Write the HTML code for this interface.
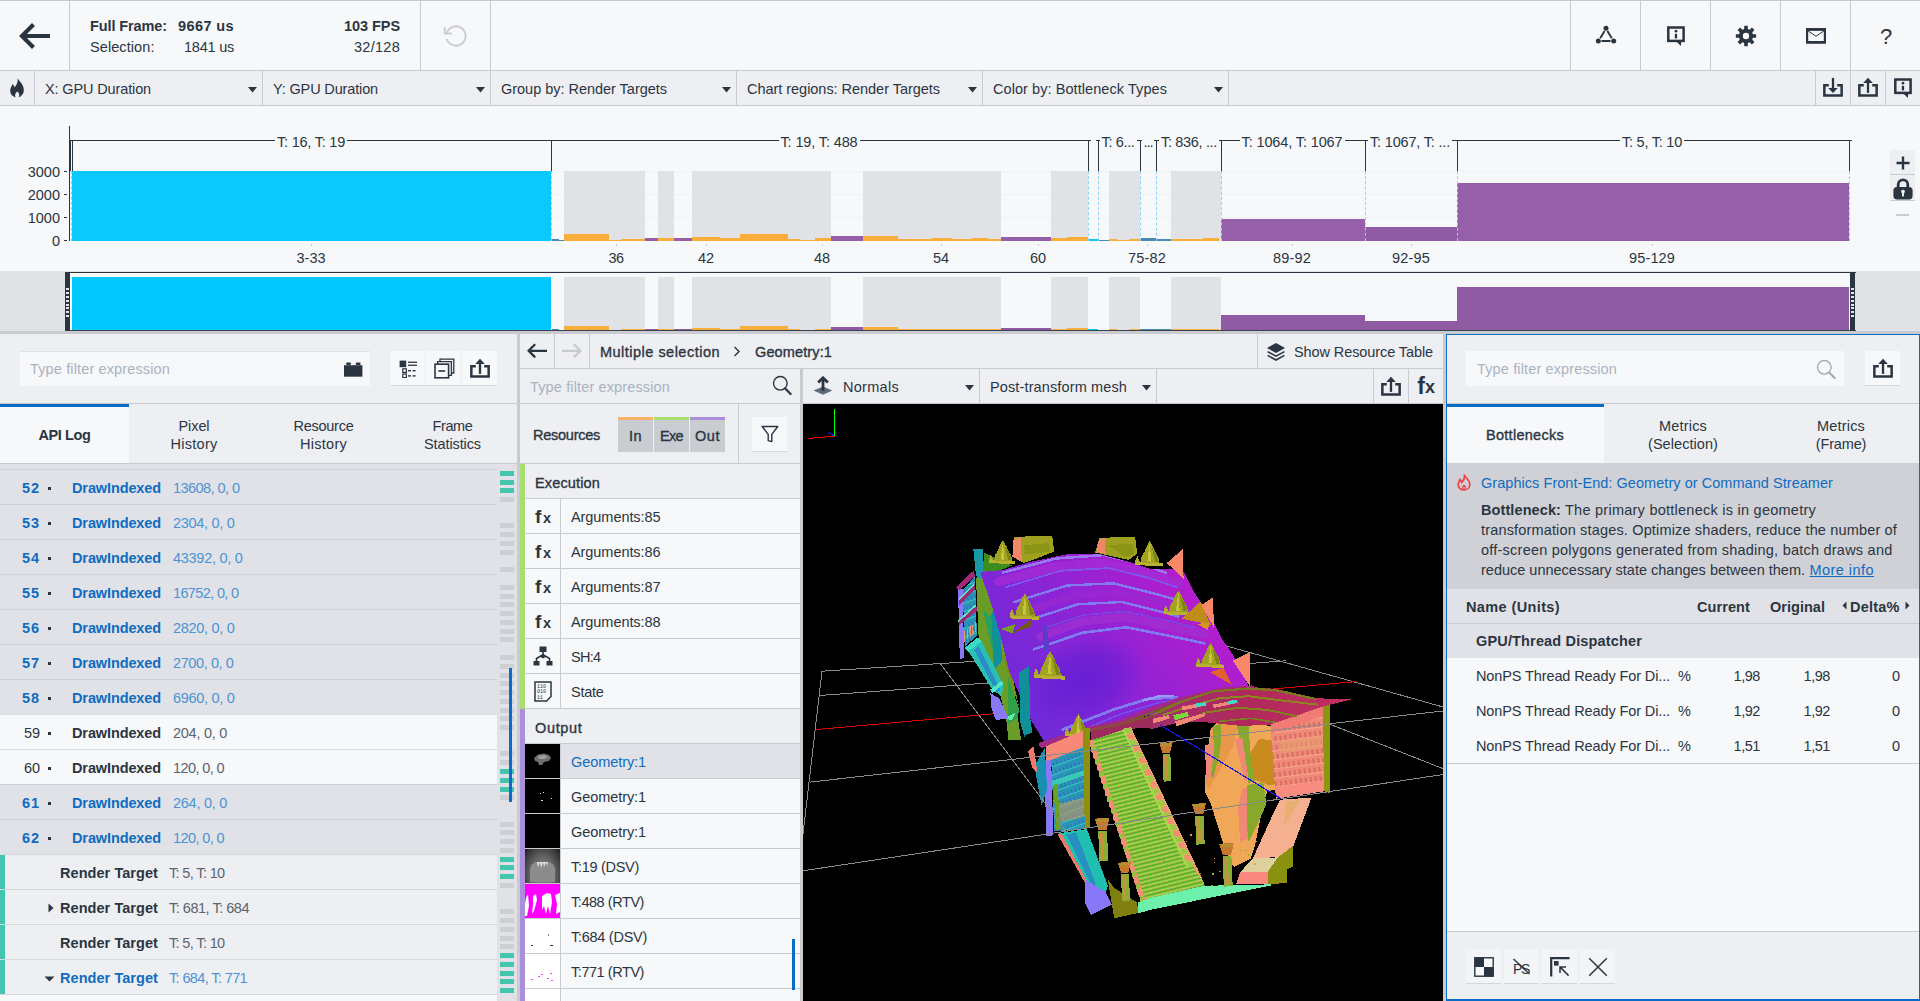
<!DOCTYPE html>
<html lang="en"><head><meta charset="utf-8"><title>Graphics Frame Analyzer</title>
<style>
html,body{margin:0;padding:0;background:#f7f8fa;overflow:hidden}
#app{position:relative;width:1920px;height:1001px;overflow:hidden;background:#f7f8fa;font-family:"Liberation Sans",sans-serif;color:#2b3541}
#app div,#app span.t,#app svg{position:absolute}
span.t{white-space:pre}

</style></head>
<body>
<div id="app">
<div style="left:0px;top:0px;width:1920px;height:70px;background:#f7f8fa;"></div>
<div style="left:0px;top:0px;width:1920px;height:1px;background:#c5c7cc;"></div>
<div style="left:0px;top:70px;width:1920px;height:1px;background:#c9cbd0;"></div>
<div style="left:69px;top:1px;width:1px;height:69px;background:#c9cbd0;"></div>
<div style="left:420px;top:1px;width:1px;height:69px;background:#c9cbd0;"></div>
<div style="left:490px;top:1px;width:1px;height:69px;background:#c9cbd0;"></div>
<div style="left:1570px;top:1px;width:1px;height:69px;background:#c9cbd0;"></div>
<div style="left:1640px;top:1px;width:1px;height:69px;background:#c9cbd0;"></div>
<div style="left:1710px;top:1px;width:1px;height:69px;background:#c9cbd0;"></div>
<div style="left:1780px;top:1px;width:1px;height:69px;background:#c9cbd0;"></div>
<div style="left:1850px;top:1px;width:1px;height:69px;background:#c9cbd0;"></div>
<svg style="left:19px;top:22px;" width="32" height="28" viewBox="0 0 32 28"><path d="M14.5 2.5 L3 14 L14.5 25.5 M3 14 H31" fill="none" stroke="#2b3541" stroke-width="4.2" stroke-linejoin="miter"/></svg>
<span class="t " style="left:90.00px;top:15.98px;font-size:14.5px;line-height:20px;color:#2b3541;font-weight:700;letter-spacing:-0.105px;">Full Frame:</span>
<span class="t " style="left:178.00px;top:15.98px;font-size:14.5px;line-height:20px;color:#2b3541;font-weight:700;letter-spacing:0.397px;">9667 us</span>
<span class="t " style="left:90.00px;top:36.98px;font-size:14.5px;line-height:20px;color:#2b3541;letter-spacing:0.081px;">Selection:</span>
<span class="t " style="left:184.00px;top:36.98px;font-size:14.5px;line-height:20px;color:#2b3541;letter-spacing:-0.230px;">1841 us</span>
<span class="t " style="left:344.00px;top:15.98px;font-size:14.5px;line-height:20px;color:#2b3541;font-weight:700;letter-spacing:-0.060px;">103 FPS</span>
<span class="t " style="left:354.00px;top:36.98px;font-size:14.5px;line-height:20px;color:#2b3541;letter-spacing:0.273px;">32/128</span>
<svg style="left:442.6px;top:22.8px;" width="26" height="26" viewBox="0 0 26 26"><path d="M3.6 10.2 A9.7 9.7 0 1 1 3.7 16" fill="none" stroke="#caccd1" stroke-width="1.9"/><path d="M1.7 4.2 V10.5 H8.8" fill="none" stroke="#caccd1" stroke-width="1.9"/></svg>
<svg style="left:1594px;top:24px;" width="24" height="24" viewBox="0 0 24 24"><path d="M10.6 7 L6.2 14.2 M13.4 7 L17.8 14.2 M7.4 17 H16.6" fill="none" stroke="#2b3541" stroke-width="1.9"/><circle cx="12" cy="4.3" r="2.5" fill="#2b3541"/><circle cx="4.3" cy="17" r="2.5" fill="#2b3541"/><circle cx="19.7" cy="17" r="2.5" fill="#2b3541"/></svg>
<svg style="left:1666px;top:25px;" width="20" height="22" viewBox="0 0 20 22"><rect x="2.3" y="2.5" width="15.3" height="13.4" fill="none" stroke="#2b3541" stroke-width="2.5"/><path d="M10.6 16.8 H15.2 L14.9 21 Z" fill="#2b3541"/><rect x="8.8" y="8.8" width="2.3" height="4.6" fill="#2b3541"/><circle cx="9.95" cy="6.2" r="1.35" fill="#2b3541"/></svg>
<svg style="left:1734px;top:24px;" width="24" height="24" viewBox="0 0 24 24"><path d="M10.26 1.85 L13.74 1.85 L13.85 5.04 L15.61 5.77 L17.95 3.59 L20.41 6.05 L18.23 8.39 L18.96 10.15 L22.15 10.26 L22.15 13.74 L18.96 13.85 L18.23 15.61 L20.41 17.95 L17.95 20.41 L15.61 18.23 L13.85 18.96 L13.74 22.15 L10.26 22.15 L10.15 18.96 L8.39 18.23 L6.05 20.41 L3.59 17.95 L5.77 15.61 L5.04 13.85 L1.85 13.74 L1.85 10.26 L5.04 10.15 L5.77 8.39 L3.59 6.05 L6.05 3.59 L8.39 5.77 L10.15 5.04 Z M15.2 12 A3.2 3.2 0 1 0 8.8 12 A3.2 3.2 0 1 0 15.2 12 Z" fill="#2b3541" fill-rule="evenodd"/></svg>
<svg style="left:1805px;top:27px;" width="22" height="18" viewBox="0 0 22 18"><rect x="2.1" y="2.3" width="17.8" height="13" fill="none" stroke="#2b3541" stroke-width="2.2"/><rect x="1" y="1.2" width="20" height="2.6" fill="#2b3541"/><rect x="1" y="14" width="20" height="2.6" fill="#2b3541"/><path d="M2.5 3.5 L11 9.2 L19.5 3.5" fill="none" stroke="#2b3541" stroke-width="1"/></svg>
<span class="t " style="left:1879.88px;top:20.88px;font-size:22px;line-height:31px;color:#2b3541;">?</span>
<div style="left:0px;top:71px;width:1920px;height:34px;background:#eeeff3;"></div>
<div style="left:0px;top:105px;width:1920px;height:1px;background:#c9cbd0;"></div>
<div style="left:34px;top:71px;width:1px;height:34px;background:#c9cbd0;"></div>
<div style="left:262px;top:71px;width:1px;height:34px;background:#c9cbd0;"></div>
<div style="left:490px;top:71px;width:1px;height:34px;background:#c9cbd0;"></div>
<div style="left:736px;top:71px;width:1px;height:34px;background:#c9cbd0;"></div>
<div style="left:982px;top:71px;width:1px;height:34px;background:#c9cbd0;"></div>
<div style="left:1228px;top:71px;width:1px;height:34px;background:#c9cbd0;"></div>
<div style="left:1815px;top:71px;width:1px;height:34px;background:#c9cbd0;"></div>
<div style="left:1850px;top:71px;width:1px;height:34px;background:#c9cbd0;"></div>
<div style="left:1885px;top:71px;width:1px;height:34px;background:#c9cbd0;"></div>
<svg style="left:9px;top:78px;" width="16" height="20" viewBox="0 0 16 20"><path d="M8.6 0.3 C10.5 3.5 14.8 6.5 14.8 12 C14.8 16 12 18.6 9.6 19.2 C10.8 17.6 10.6 15.2 8.2 13.6 C6.2 15.2 5.6 17.4 6.6 19.2 C3.6 18.4 1 16 1.2 12.2 C1.4 9.6 3 8 3.6 6 C4.8 7.2 5.2 8.2 5.2 9.6 C7.6 7.6 9.2 4 8.6 0.3 Z" fill="#2b3541"/></svg>
<span class="t " style="left:45.00px;top:78.98px;font-size:14.5px;line-height:20px;color:#2b3541;letter-spacing:-0.133px;">X: GPU Duration</span>
<svg style="left:247.5px;top:86.6px;" width="9" height="6" viewBox="0 0 9 6"><path d="M0 0 H9 L4.5 5.6 Z" fill="#2b3541"/></svg>
<span class="t " style="left:273.00px;top:78.98px;font-size:14.5px;line-height:20px;color:#2b3541;letter-spacing:-0.146px;">Y: GPU Duration</span>
<svg style="left:475.5px;top:86.6px;" width="9" height="6" viewBox="0 0 9 6"><path d="M0 0 H9 L4.5 5.6 Z" fill="#2b3541"/></svg>
<span class="t " style="left:501.00px;top:78.98px;font-size:14.5px;line-height:20px;color:#2b3541;letter-spacing:-0.024px;">Group by: Render Targets</span>
<svg style="left:721.5px;top:86.6px;" width="9" height="6" viewBox="0 0 9 6"><path d="M0 0 H9 L4.5 5.6 Z" fill="#2b3541"/></svg>
<span class="t " style="left:747.00px;top:78.98px;font-size:14.5px;line-height:20px;color:#2b3541;letter-spacing:-0.034px;">Chart regions: Render Targets</span>
<svg style="left:967.5px;top:86.6px;" width="9" height="6" viewBox="0 0 9 6"><path d="M0 0 H9 L4.5 5.6 Z" fill="#2b3541"/></svg>
<span class="t " style="left:993.00px;top:78.98px;font-size:14.5px;line-height:20px;color:#2b3541;letter-spacing:0.069px;">Color by: Bottleneck Types</span>
<svg style="left:1213.5px;top:86.6px;" width="9" height="6" viewBox="0 0 9 6"><path d="M0 0 H9 L4.5 5.6 Z" fill="#2b3541"/></svg>
<svg style="left:1823px;top:77px;" width="20" height="20" viewBox="0 0 20 20"><path d="M5.8 8.35 H1.35 V18.5 H18.65 V8.35 H14.2" fill="none" stroke="#2b3541" stroke-width="2.5"/><rect x="8.85" y="0.9" width="2.3" height="10.6" fill="#2b3541"/><path d="M5.2 11.1 L10 16 L14.8 11.1 Z" fill="#2b3541"/></svg>
<svg style="left:1858px;top:77px;" width="20" height="20" viewBox="0 0 20 20"><path d="M5.8 8.35 H1.35 V18.5 H18.65 V8.35 H14.2" fill="none" stroke="#2b3541" stroke-width="2.5"/><rect x="8.85" y="5" width="2.3" height="10.9" fill="#2b3541"/><path d="M5.2 5.9 L10 0.8 L14.8 5.9 Z" fill="#2b3541"/></svg>
<svg style="left:1893px;top:77px;" width="20" height="22" viewBox="0 0 20 22"><rect x="2.3" y="2.5" width="15.3" height="13.4" fill="none" stroke="#2b3541" stroke-width="2.5"/><path d="M10.6 16.8 H15.2 L14.9 21 Z" fill="#2b3541"/><rect x="8.8" y="8.8" width="2.3" height="4.6" fill="#2b3541"/><circle cx="9.95" cy="6.2" r="1.35" fill="#2b3541"/></svg>
<div style="left:0px;top:106px;width:1920px;height:165px;background:#f7f8fa;"></div>
<div style="left:69px;top:126px;width:1px;height:115px;background:#2b3541;"></div>
<span class="t " style="left:27.73px;top:161.88px;font-size:14.5px;line-height:20px;color:#2b3541;">3000</span>
<div style="left:64px;top:171px;width:3px;height:1px;background:#2b3541;"></div>
<span class="t " style="left:27.73px;top:184.88px;font-size:14.5px;line-height:20px;color:#2b3541;">2000</span>
<div style="left:64px;top:194px;width:3px;height:1px;background:#2b3541;"></div>
<span class="t " style="left:27.73px;top:207.88px;font-size:14.5px;line-height:20px;color:#2b3541;">1000</span>
<div style="left:64px;top:217px;width:3px;height:1px;background:#2b3541;"></div>
<span class="t " style="left:51.92px;top:230.88px;font-size:14.5px;line-height:20px;color:#2b3541;">0</span>
<div style="left:64px;top:240px;width:3px;height:1px;background:#2b3541;"></div>
<div style="left:72px;top:171px;width:1778px;height:1px;background:#f0f1f4;"></div>
<div style="left:72px;top:194px;width:1778px;height:1px;background:#f0f1f4;"></div>
<div style="left:72px;top:217px;width:1778px;height:1px;background:#f0f1f4;"></div>
<div style="left:564px;top:171px;width:81px;height:70px;background:#e1e2e6;"></div>
<div style="left:658px;top:171px;width:16px;height:70px;background:#e1e2e6;"></div>
<div style="left:692px;top:171px;width:139px;height:70px;background:#e1e2e6;"></div>
<div style="left:863px;top:171px;width:138px;height:70px;background:#e1e2e6;"></div>
<div style="left:1051px;top:171px;width:37px;height:70px;background:#e1e2e6;"></div>
<div style="left:1109px;top:171px;width:31px;height:70px;background:#e1e2e6;"></div>
<div style="left:1171px;top:171px;width:50px;height:70px;background:#e1e2e6;"></div>
<div style="left:72px;top:171px;width:479px;height:70px;background:#0cc9fd;"></div>
<div style="left:552px;top:239px;width:7px;height:2px;background:#4a8bb5;"></div>
<div style="left:559px;top:240px;width:5px;height:1px;background:#4a8bb5;"></div>
<div style="left:564px;top:234px;width:45px;height:7px;background:#f9ae3b;"></div>
<div style="left:609px;top:240px;width:12px;height:1px;background:#f9ae3b;"></div>
<div style="left:621px;top:239px;width:24px;height:2px;background:#f9ae3b;"></div>
<div style="left:645px;top:238px;width:13px;height:3px;background:#9560a9;"></div>
<div style="left:658px;top:238px;width:16px;height:3px;background:#f9ae3b;"></div>
<div style="left:674px;top:238px;width:18px;height:3px;background:#9560a9;"></div>
<div style="left:692px;top:237px;width:28px;height:4px;background:#f9ae3b;"></div>
<div style="left:720px;top:238px;width:20px;height:3px;background:#f9ae3b;"></div>
<div style="left:740px;top:234px;width:48px;height:7px;background:#f9ae3b;"></div>
<div style="left:788px;top:239px;width:12px;height:2px;background:#f9ae3b;"></div>
<div style="left:800px;top:240px;width:15px;height:1px;background:#f9ae3b;"></div>
<div style="left:815px;top:238px;width:16px;height:3px;background:#f9ae3b;"></div>
<div style="left:831px;top:236px;width:32px;height:5px;background:#9560a9;"></div>
<div style="left:863px;top:236px;width:35px;height:5px;background:#f9ae3b;"></div>
<div style="left:898px;top:239px;width:34px;height:2px;background:#f9ae3b;"></div>
<div style="left:932px;top:238px;width:20px;height:3px;background:#f9ae3b;"></div>
<div style="left:952px;top:239px;width:20px;height:2px;background:#f9ae3b;"></div>
<div style="left:972px;top:238px;width:16px;height:3px;background:#f9ae3b;"></div>
<div style="left:988px;top:239px;width:13px;height:2px;background:#f9ae3b;"></div>
<div style="left:1001px;top:237px;width:50px;height:4px;background:#9560a9;"></div>
<div style="left:1051px;top:238px;width:16px;height:3px;background:#f9ae3b;"></div>
<div style="left:1067px;top:237px;width:21px;height:4px;background:#f9ae3b;"></div>
<div style="left:1088px;top:239px;width:10px;height:2px;background:#0cc9fd;"></div>
<div style="left:1098px;top:240px;width:11px;height:1px;background:#4a8bb5;"></div>
<div style="left:1109px;top:239px;width:8px;height:2px;background:#f9ae3b;"></div>
<div style="left:1117px;top:240px;width:12px;height:1px;background:#f9ae3b;"></div>
<div style="left:1129px;top:239px;width:11px;height:2px;background:#f9ae3b;"></div>
<div style="left:1140px;top:238px;width:16px;height:3px;background:#4a8bb5;"></div>
<div style="left:1156px;top:239px;width:15px;height:2px;background:#4a8bb5;"></div>
<div style="left:1171px;top:239px;width:32px;height:2px;background:#f9ae3b;"></div>
<div style="left:1203px;top:238px;width:16px;height:3px;background:#f9ae3b;"></div>
<div style="left:1221px;top:219px;width:144px;height:22px;background:#9560a9;"></div>
<div style="left:1365px;top:227px;width:92px;height:14px;background:#8f5ba3;"></div>
<div style="left:1457px;top:183px;width:392px;height:58px;background:#9560a9;"></div>
<div style="left:71px;top:171px;width:0px;height:70px;border-left:1px dashed #8fd3f0;"></div>
<div style="left:551px;top:171px;width:0px;height:70px;border-left:1px dashed #8fd3f0;"></div>
<div style="left:1088px;top:171px;width:0px;height:70px;border-left:1px dashed #8fd3f0;"></div>
<div style="left:1098px;top:171px;width:0px;height:70px;border-left:1px dashed #8fd3f0;"></div>
<div style="left:1140px;top:171px;width:0px;height:70px;border-left:1px dashed #8fd3f0;"></div>
<div style="left:1156px;top:171px;width:0px;height:70px;border-left:1px dashed #8fd3f0;"></div>
<div style="left:1221px;top:171px;width:0px;height:70px;border-left:1px dashed #8fd3f0;"></div>
<div style="left:1365px;top:171px;width:0px;height:70px;border-left:1px dashed #8fd3f0;"></div>
<div style="left:1457px;top:171px;width:0px;height:70px;border-left:1px dashed #8fd3f0;"></div>
<div style="left:1849px;top:171px;width:0px;height:70px;border-left:1px dashed #8fd3f0;"></div>
<div style="left:70px;top:140px;width:484px;height:1px;background:#2b3541;"></div>
<div style="left:70px;top:140px;width:1px;height:31px;background:#2b3541;"></div>
<div style="left:551px;top:140px;width:1px;height:31px;background:#2b3541;"></div>
<div style="left:275.0px;top:132px;width:72px;height:18px;background:#f7f8fa;"></div>
<span class="t " style="left:277.00px;top:131.98px;font-size:14.5px;line-height:20px;color:#2b3541;letter-spacing:-0.223px;">T: 16, T: 19</span>
<div style="left:549px;top:140px;width:542px;height:1px;background:#2b3541;"></div>
<div style="left:551px;top:140px;width:1px;height:31px;background:#2b3541;"></div>
<div style="left:1088px;top:140px;width:1px;height:31px;background:#2b3541;"></div>
<div style="left:778.5px;top:132px;width:81px;height:18px;background:#f7f8fa;"></div>
<span class="t " style="left:780.50px;top:131.98px;font-size:14.5px;line-height:20px;color:#2b3541;letter-spacing:-0.133px;">T: 19, T: 488</span>
<div style="left:1096px;top:140px;width:47px;height:1px;background:#2b3541;"></div>
<div style="left:1098px;top:140px;width:1px;height:31px;background:#2b3541;"></div>
<div style="left:1140px;top:140px;width:1px;height:31px;background:#2b3541;"></div>
<div style="left:1099.5px;top:132px;width:37px;height:18px;background:#f7f8fa;"></div>
<span class="t " style="left:1101.50px;top:131.98px;font-size:14.5px;line-height:20px;color:#2b3541;letter-spacing:-0.353px;">T: 6...</span>
<div style="left:1138px;top:140px;width:21px;height:1px;background:#2b3541;"></div>
<div style="left:1140px;top:140px;width:1px;height:31px;background:#2b3541;"></div>
<div style="left:1156px;top:140px;width:1px;height:31px;background:#2b3541;"></div>
<div style="left:1141.5px;top:132px;width:13px;height:18px;background:#f7f8fa;"></div>
<span class="t " style="left:1143.50px;top:131.98px;font-size:14.5px;line-height:20px;color:#2b3541;letter-spacing:-1.031px;">...</span>
<div style="left:1154px;top:140px;width:70px;height:1px;background:#2b3541;"></div>
<div style="left:1156px;top:140px;width:1px;height:31px;background:#2b3541;"></div>
<div style="left:1221px;top:140px;width:1px;height:31px;background:#2b3541;"></div>
<div style="left:1159.0px;top:132px;width:60px;height:18px;background:#f7f8fa;"></div>
<span class="t " style="left:1161.00px;top:131.98px;font-size:14.5px;line-height:20px;color:#2b3541;letter-spacing:-0.332px;">T: 836, ...</span>
<div style="left:1219px;top:140px;width:149px;height:1px;background:#2b3541;"></div>
<div style="left:1221px;top:140px;width:1px;height:31px;background:#2b3541;"></div>
<div style="left:1365px;top:140px;width:1px;height:31px;background:#2b3541;"></div>
<div style="left:1239.5px;top:132px;width:105px;height:18px;background:#f7f8fa;"></div>
<span class="t " style="left:1241.50px;top:131.98px;font-size:14.5px;line-height:20px;color:#2b3541;letter-spacing:-0.121px;">T: 1064, T: 1067</span>
<div style="left:1363px;top:140px;width:97px;height:1px;background:#2b3541;"></div>
<div style="left:1365px;top:140px;width:1px;height:31px;background:#2b3541;"></div>
<div style="left:1457px;top:140px;width:1px;height:31px;background:#2b3541;"></div>
<div style="left:1368.0px;top:132px;width:84px;height:18px;background:#f7f8fa;"></div>
<span class="t " style="left:1370.00px;top:131.98px;font-size:14.5px;line-height:20px;color:#2b3541;letter-spacing:-0.184px;">T: 1067, T: ...</span>
<div style="left:1455px;top:140px;width:397px;height:1px;background:#2b3541;"></div>
<div style="left:1457px;top:140px;width:1px;height:31px;background:#2b3541;"></div>
<div style="left:1849px;top:140px;width:1px;height:31px;background:#2b3541;"></div>
<div style="left:1620.0px;top:132px;width:64px;height:18px;background:#f7f8fa;"></div>
<span class="t " style="left:1622.00px;top:131.98px;font-size:14.5px;line-height:20px;color:#2b3541;letter-spacing:-0.237px;">T: 5, T: 10</span>
<div style="left:72px;top:140px;width:1px;height:31px;background:#2b3541;"></div>
<span class="t " style="left:296.50px;top:247.98px;font-size:14.5px;line-height:20px;color:#2b3541;letter-spacing:-0.008px;">3-33</span>
<div style="left:311px;top:244px;width:1px;height:2px;background:#c9cbd0;"></div>
<span class="t " style="left:608.50px;top:247.98px;font-size:14.5px;line-height:20px;color:#2b3541;letter-spacing:-0.570px;">36</span>
<div style="left:616px;top:244px;width:1px;height:2px;background:#c9cbd0;"></div>
<span class="t " style="left:698.00px;top:247.98px;font-size:14.5px;line-height:20px;color:#2b3541;letter-spacing:-0.070px;">42</span>
<div style="left:706px;top:244px;width:1px;height:2px;background:#c9cbd0;"></div>
<span class="t " style="left:814.00px;top:247.98px;font-size:14.5px;line-height:20px;color:#2b3541;letter-spacing:-0.070px;">48</span>
<div style="left:822px;top:244px;width:1px;height:2px;background:#c9cbd0;"></div>
<span class="t " style="left:933.00px;top:247.98px;font-size:14.5px;line-height:20px;color:#2b3541;letter-spacing:-0.070px;">54</span>
<div style="left:941px;top:244px;width:1px;height:2px;background:#c9cbd0;"></div>
<span class="t " style="left:1030.00px;top:247.98px;font-size:14.5px;line-height:20px;color:#2b3541;letter-spacing:-0.070px;">60</span>
<div style="left:1038px;top:244px;width:1px;height:2px;background:#c9cbd0;"></div>
<span class="t " style="left:1128.00px;top:247.98px;font-size:14.5px;line-height:20px;color:#2b3541;letter-spacing:0.181px;">75-82</span>
<div style="left:1147px;top:244px;width:1px;height:2px;background:#c9cbd0;"></div>
<span class="t " style="left:1273.00px;top:247.98px;font-size:14.5px;line-height:20px;color:#2b3541;letter-spacing:0.181px;">89-92</span>
<div style="left:1292px;top:244px;width:1px;height:2px;background:#c9cbd0;"></div>
<span class="t " style="left:1392.00px;top:247.98px;font-size:14.5px;line-height:20px;color:#2b3541;letter-spacing:0.181px;">92-95</span>
<div style="left:1411px;top:244px;width:1px;height:2px;background:#c9cbd0;"></div>
<span class="t " style="left:1629.00px;top:247.98px;font-size:14.5px;line-height:20px;color:#2b3541;letter-spacing:0.141px;">95-129</span>
<div style="left:1652px;top:244px;width:1px;height:2px;background:#c9cbd0;"></div>
<div style="left:1890px;top:150px;width:25px;height:24px;background:#eeeff3;"></div>
<div style="left:1890px;top:174px;width:25px;height:1px;background:#c9cbd0;"></div>
<div style="left:1890px;top:175px;width:25px;height:25px;background:#eeeff3;"></div>
<div style="left:1890px;top:200px;width:25px;height:1px;background:#c9cbd0;"></div>
<svg style="left:1896px;top:156px;" width="14" height="14" viewBox="0 0 14 14"><path d="M7 0.5 V13.5 M0.5 7 H13.5" stroke="#2b3541" stroke-width="2.4"/></svg>
<svg style="left:1893px;top:177px;" width="20" height="23" viewBox="0 0 20 23"><path d="M5.2 12 V7.6 A4.8 4.8 0 0 1 14.8 7.6 V12" fill="none" stroke="#2b3541" stroke-width="2.8"/><rect x="0.4" y="10" width="19.2" height="12.4" rx="3.6" fill="#2b3541"/><circle cx="10" cy="14.6" r="1.9" fill="#eeeff3"/><rect x="9" y="15" width="2" height="4.4" fill="#eeeff3"/></svg>
<div style="left:1896px;top:214px;width:13px;height:2px;background:#c9cbd0;"></div>
<div style="left:0px;top:271px;width:1920px;height:60px;background:#e1e2e6;"></div>
<div style="left:70px;top:272px;width:1780px;height:59px;background:#f7f8fa;"></div>
<div style="left:65px;top:272px;width:1791px;height:1px;background:#2b3541;"></div>
<div style="left:65px;top:330px;width:1791px;height:1px;background:#3a4350;"></div>
<div style="left:65px;top:272px;width:5px;height:59px;background:#2b3541;"></div>
<div style="left:1850px;top:272px;width:5px;height:59px;background:#2b3541;"></div>
<div style="left:66px;top:288px;width:3px;height:2px;background:#e4e5e8;"></div>
<div style="left:66px;top:292px;width:3px;height:2px;background:#e4e5e8;"></div>
<div style="left:66px;top:296px;width:3px;height:2px;background:#e4e5e8;"></div>
<div style="left:66px;top:300px;width:3px;height:2px;background:#e4e5e8;"></div>
<div style="left:66px;top:304px;width:3px;height:2px;background:#e4e5e8;"></div>
<div style="left:66px;top:307px;width:3px;height:2px;background:#e4e5e8;"></div>
<div style="left:66px;top:311px;width:3px;height:2px;background:#e4e5e8;"></div>
<div style="left:66px;top:315px;width:3px;height:2px;background:#e4e5e8;"></div>
<div style="left:1851px;top:288px;width:3px;height:2px;background:#e4e5e8;"></div>
<div style="left:1851px;top:292px;width:3px;height:2px;background:#e4e5e8;"></div>
<div style="left:1851px;top:296px;width:3px;height:2px;background:#e4e5e8;"></div>
<div style="left:1851px;top:300px;width:3px;height:2px;background:#e4e5e8;"></div>
<div style="left:1851px;top:304px;width:3px;height:2px;background:#e4e5e8;"></div>
<div style="left:1851px;top:307px;width:3px;height:2px;background:#e4e5e8;"></div>
<div style="left:1851px;top:311px;width:3px;height:2px;background:#e4e5e8;"></div>
<div style="left:1851px;top:315px;width:3px;height:2px;background:#e4e5e8;"></div>
<div style="left:564px;top:277px;width:81px;height:53px;background:#e1e2e6;"></div>
<div style="left:658px;top:277px;width:16px;height:53px;background:#e1e2e6;"></div>
<div style="left:692px;top:277px;width:139px;height:53px;background:#e1e2e6;"></div>
<div style="left:863px;top:277px;width:138px;height:53px;background:#e1e2e6;"></div>
<div style="left:1051px;top:277px;width:37px;height:53px;background:#e1e2e6;"></div>
<div style="left:1109px;top:277px;width:31px;height:53px;background:#e1e2e6;"></div>
<div style="left:1171px;top:277px;width:50px;height:53px;background:#e1e2e6;"></div>
<div style="left:72px;top:277px;width:479px;height:53px;background:#00c7fd;"></div>
<div style="left:552px;top:329px;width:7px;height:1px;background:#4a8bb5;"></div>
<div style="left:564px;top:326px;width:45px;height:4px;background:#f9ae3b;"></div>
<div style="left:621px;top:329px;width:24px;height:1px;background:#f9ae3b;"></div>
<div style="left:645px;top:329px;width:13px;height:1px;background:#8f5ba3;"></div>
<div style="left:658px;top:329px;width:16px;height:1px;background:#f9ae3b;"></div>
<div style="left:674px;top:329px;width:18px;height:1px;background:#8f5ba3;"></div>
<div style="left:692px;top:328px;width:28px;height:2px;background:#f9ae3b;"></div>
<div style="left:720px;top:329px;width:20px;height:1px;background:#f9ae3b;"></div>
<div style="left:740px;top:326px;width:48px;height:4px;background:#f9ae3b;"></div>
<div style="left:788px;top:329px;width:12px;height:1px;background:#f9ae3b;"></div>
<div style="left:815px;top:329px;width:16px;height:1px;background:#f9ae3b;"></div>
<div style="left:831px;top:327px;width:32px;height:3px;background:#8f5ba3;"></div>
<div style="left:863px;top:327px;width:35px;height:3px;background:#f9ae3b;"></div>
<div style="left:898px;top:329px;width:34px;height:1px;background:#f9ae3b;"></div>
<div style="left:932px;top:329px;width:20px;height:1px;background:#f9ae3b;"></div>
<div style="left:952px;top:329px;width:20px;height:1px;background:#f9ae3b;"></div>
<div style="left:972px;top:329px;width:16px;height:1px;background:#f9ae3b;"></div>
<div style="left:988px;top:329px;width:13px;height:1px;background:#f9ae3b;"></div>
<div style="left:1001px;top:328px;width:50px;height:2px;background:#8f5ba3;"></div>
<div style="left:1051px;top:329px;width:16px;height:1px;background:#f9ae3b;"></div>
<div style="left:1067px;top:328px;width:21px;height:2px;background:#f9ae3b;"></div>
<div style="left:1088px;top:329px;width:10px;height:1px;background:#00c7fd;"></div>
<div style="left:1109px;top:329px;width:8px;height:1px;background:#f9ae3b;"></div>
<div style="left:1129px;top:329px;width:11px;height:1px;background:#f9ae3b;"></div>
<div style="left:1140px;top:329px;width:16px;height:1px;background:#4a8bb5;"></div>
<div style="left:1156px;top:329px;width:15px;height:1px;background:#4a8bb5;"></div>
<div style="left:1171px;top:329px;width:32px;height:1px;background:#f9ae3b;"></div>
<div style="left:1203px;top:329px;width:16px;height:1px;background:#f9ae3b;"></div>
<div style="left:1221px;top:315px;width:144px;height:15px;background:#8f5ba3;"></div>
<div style="left:1365px;top:321px;width:92px;height:9px;background:#8f5ba3;"></div>
<div style="left:1457px;top:287px;width:392px;height:43px;background:#8f5ba3;"></div>
<div style="left:0px;top:331px;width:1920px;height:3px;background:#c9cbd0;"></div>
<div style="left:0px;top:334px;width:1920px;height:667px;background:#eeeff3;"></div>
<div style="left:517px;top:334px;width:3px;height:667px;background:#c9cbd0;"></div>
<div style="left:800px;top:369px;width:3px;height:632px;background:#c9cbd0;"></div>
<div style="left:1443px;top:334px;width:3px;height:667px;background:#c9cbd0;"></div>
<div style="left:20px;top:351px;width:350px;height:35px;background:#f7f8fa;"></div>
<div style="left:20px;top:351px;width:350px;height:1px;background:#dfe1e5;"></div>
<span class="t " style="left:30.00px;top:358.98px;font-size:14.5px;line-height:20px;color:#a9b3c1;letter-spacing:0.136px;">Type filter expression</span>
<svg style="left:344px;top:362px;" width="19" height="15" viewBox="0 0 19 15"><rect x="0" y="3.2" width="18.4" height="11.5" fill="#2b3541"/><rect x="2.1" y="0.5" width="4.9" height="2.4" rx="0.8" fill="#2b3541"/><rect x="11.7" y="0.5" width="4.9" height="2.4" rx="0.8" fill="#2b3541"/></svg>
<div style="left:390px;top:351px;width:35px;height:34px;background:#f7f8fa;"></div>
<div style="left:390px;top:385px;width:35px;height:1px;background:#d5d7db;"></div>
<div style="left:426px;top:351px;width:35px;height:34px;background:#f7f8fa;"></div>
<div style="left:426px;top:385px;width:35px;height:1px;background:#d5d7db;"></div>
<div style="left:462px;top:351px;width:35px;height:34px;background:#f7f8fa;"></div>
<div style="left:462px;top:385px;width:35px;height:1px;background:#d5d7db;"></div>
<svg style="left:399px;top:360px;" width="19" height="18" viewBox="0 0 19 18"><rect x="0.6" y="0.6" width="6.6" height="6.6" fill="#2b3541"/><rect x="9" y="1.6" width="9" height="1.3" fill="#2b3541"/><rect x="9" y="4.6" width="9" height="1.3" fill="#2b3541"/><rect x="3.8" y="8.8" width="3.6" height="3.6" fill="none" stroke="#2b3541" stroke-width="1.2"/><rect x="9" y="10" width="3" height="1.4" fill="#2b3541"/><rect x="13.6" y="10" width="3" height="1.4" fill="#2b3541"/><rect x="3.8" y="14" width="3.6" height="3.6" fill="none" stroke="#2b3541" stroke-width="1.2"/><rect x="9" y="15.2" width="3" height="1.4" fill="#2b3541"/><rect x="13.6" y="15.2" width="3" height="1.4" fill="#2b3541"/></svg>
<svg style="left:434px;top:358px;" width="21" height="21" viewBox="0 0 21 21"><path d="M6 4 V1.2 H19.8 V15 H17" fill="none" stroke="#2b3541" stroke-width="1.3"/><path d="M3.6 6.4 V3.6 H17.4 V17.4 H14.6" fill="none" stroke="#2b3541" stroke-width="1.3"/><rect x="1" y="6.2" width="13.6" height="13.6" fill="#f7f8fa" stroke="#2b3541" stroke-width="1.6"/><rect x="4.4" y="12.2" width="6.8" height="1.6" fill="#2b3541"/></svg>
<svg style="left:470px;top:358px;" width="20" height="20" viewBox="0 0 20 20"><path d="M5.8 8.35 H1.35 V18.5 H18.65 V8.35 H14.2" fill="none" stroke="#2b3541" stroke-width="2.5"/><rect x="8.85" y="5" width="2.3" height="10.9" fill="#2b3541"/><path d="M5.2 5.9 L10 0.8 L14.8 5.9 Z" fill="#2b3541"/></svg>
<div style="left:0px;top:403px;width:517px;height:1px;background:#c9cbd0;"></div>
<div style="left:0px;top:404px;width:129px;height:59px;background:#f7f8fa;"></div>
<div style="left:0px;top:404px;width:129px;height:3px;background:#0a6cc4;"></div>
<span class="t " style="left:38.50px;top:424.98px;font-size:14.5px;line-height:20px;color:#2b3541;font-weight:700;letter-spacing:-0.397px;">API Log</span>
<span class="t " style="left:178.50px;top:415.98px;font-size:14.5px;line-height:20px;color:#2b3541;letter-spacing:-0.087px;">Pixel</span>
<span class="t " style="left:170.50px;top:433.98px;font-size:14.5px;line-height:20px;color:#2b3541;letter-spacing:0.268px;">History</span>
<span class="t " style="left:293.50px;top:415.98px;font-size:14.5px;line-height:20px;color:#2b3541;letter-spacing:-0.258px;">Resource</span>
<span class="t " style="left:300.00px;top:433.98px;font-size:14.5px;line-height:20px;color:#2b3541;letter-spacing:0.268px;">History</span>
<span class="t " style="left:432.50px;top:415.98px;font-size:14.5px;line-height:20px;color:#2b3541;letter-spacing:-0.381px;">Frame</span>
<span class="t " style="left:424.00px;top:433.98px;font-size:14.5px;line-height:20px;color:#2b3541;letter-spacing:-0.102px;">Statistics</span>
<div style="left:0px;top:463px;width:517px;height:1px;background:#c9cbd0;"></div>
<div style="left:0px;top:464px;width:517px;height:537px;background:#e1e2e7;"></div>
<div style="left:0px;top:469px;width:497px;height:1px;background:#cfd1d6;"></div>
<span class="t " style="left:22.00px;top:478.48px;font-size:14.5px;line-height:20px;color:#0f6cc0;font-weight:700;letter-spacing:0.930px;">52</span>
<div style="left:48px;top:487px;width:3px;height:3px;background:#2b3541;"></div>
<span class="t " style="left:72.00px;top:478.48px;font-size:14.5px;line-height:20px;color:#0f6cc0;font-weight:700;letter-spacing:-0.114px;">DrawIndexed</span>
<span class="t " style="left:173.00px;top:478.48px;font-size:14.5px;line-height:20px;color:#4d93d3;letter-spacing:-0.553px;">13608, 0, 0</span>
<div style="left:0px;top:504px;width:497px;height:1px;background:#cfd1d6;"></div>
<span class="t " style="left:22.00px;top:513.48px;font-size:14.5px;line-height:20px;color:#0f6cc0;font-weight:700;letter-spacing:0.930px;">53</span>
<div style="left:48px;top:522px;width:3px;height:3px;background:#2b3541;"></div>
<span class="t " style="left:72.00px;top:513.48px;font-size:14.5px;line-height:20px;color:#0f6cc0;font-weight:700;letter-spacing:-0.114px;">DrawIndexed</span>
<span class="t " style="left:173.00px;top:513.48px;font-size:14.5px;line-height:20px;color:#4d93d3;letter-spacing:-0.300px;">2304, 0, 0</span>
<div style="left:0px;top:539px;width:497px;height:1px;background:#cfd1d6;"></div>
<span class="t " style="left:22.00px;top:548.48px;font-size:14.5px;line-height:20px;color:#0f6cc0;font-weight:700;letter-spacing:0.930px;">54</span>
<div style="left:48px;top:557px;width:3px;height:3px;background:#2b3541;"></div>
<span class="t " style="left:72.00px;top:548.48px;font-size:14.5px;line-height:20px;color:#0f6cc0;font-weight:700;letter-spacing:-0.114px;">DrawIndexed</span>
<span class="t " style="left:173.00px;top:548.48px;font-size:14.5px;line-height:20px;color:#4d93d3;letter-spacing:-0.280px;">43392, 0, 0</span>
<div style="left:0px;top:574px;width:497px;height:1px;background:#cfd1d6;"></div>
<span class="t " style="left:22.00px;top:583.48px;font-size:14.5px;line-height:20px;color:#0f6cc0;font-weight:700;letter-spacing:0.930px;">55</span>
<div style="left:48px;top:592px;width:3px;height:3px;background:#2b3541;"></div>
<span class="t " style="left:72.00px;top:583.48px;font-size:14.5px;line-height:20px;color:#0f6cc0;font-weight:700;letter-spacing:-0.114px;">DrawIndexed</span>
<span class="t " style="left:173.00px;top:583.48px;font-size:14.5px;line-height:20px;color:#4d93d3;letter-spacing:-0.643px;">16752, 0, 0</span>
<div style="left:0px;top:609px;width:497px;height:1px;background:#cfd1d6;"></div>
<span class="t " style="left:22.00px;top:618.48px;font-size:14.5px;line-height:20px;color:#0f6cc0;font-weight:700;letter-spacing:0.930px;">56</span>
<div style="left:48px;top:627px;width:3px;height:3px;background:#2b3541;"></div>
<span class="t " style="left:72.00px;top:618.48px;font-size:14.5px;line-height:20px;color:#0f6cc0;font-weight:700;letter-spacing:-0.114px;">DrawIndexed</span>
<span class="t " style="left:173.00px;top:618.48px;font-size:14.5px;line-height:20px;color:#4d93d3;letter-spacing:-0.300px;">2820, 0, 0</span>
<div style="left:0px;top:644px;width:497px;height:1px;background:#cfd1d6;"></div>
<span class="t " style="left:22.00px;top:653.48px;font-size:14.5px;line-height:20px;color:#0f6cc0;font-weight:700;letter-spacing:0.930px;">57</span>
<div style="left:48px;top:662px;width:3px;height:3px;background:#2b3541;"></div>
<span class="t " style="left:72.00px;top:653.48px;font-size:14.5px;line-height:20px;color:#0f6cc0;font-weight:700;letter-spacing:-0.114px;">DrawIndexed</span>
<span class="t " style="left:173.00px;top:653.48px;font-size:14.5px;line-height:20px;color:#4d93d3;letter-spacing:-0.400px;">2700, 0, 0</span>
<div style="left:0px;top:679px;width:497px;height:1px;background:#cfd1d6;"></div>
<span class="t " style="left:22.00px;top:688.48px;font-size:14.5px;line-height:20px;color:#0f6cc0;font-weight:700;letter-spacing:0.930px;">58</span>
<div style="left:48px;top:697px;width:3px;height:3px;background:#2b3541;"></div>
<span class="t " style="left:72.00px;top:688.48px;font-size:14.5px;line-height:20px;color:#0f6cc0;font-weight:700;letter-spacing:-0.114px;">DrawIndexed</span>
<span class="t " style="left:173.00px;top:688.48px;font-size:14.5px;line-height:20px;color:#4d93d3;letter-spacing:-0.300px;">6960, 0, 0</span>
<div style="left:0px;top:715px;width:497px;height:35px;background:#f7f8fa;"></div>
<div style="left:0px;top:714px;width:497px;height:1px;background:#dcdee2;"></div>
<span class="t " style="left:24.00px;top:723.48px;font-size:14.5px;line-height:20px;color:#2b3541;letter-spacing:-0.070px;">59</span>
<div style="left:48px;top:732px;width:3px;height:3px;background:#2b3541;"></div>
<span class="t " style="left:72.00px;top:723.48px;font-size:14.5px;line-height:20px;color:#2b3541;font-weight:700;letter-spacing:-0.114px;">DrawIndexed</span>
<span class="t " style="left:173.00px;top:723.48px;font-size:14.5px;line-height:20px;color:#5b6470;letter-spacing:-0.271px;">204, 0, 0</span>
<div style="left:0px;top:750px;width:497px;height:35px;background:#f7f8fa;"></div>
<div style="left:0px;top:749px;width:497px;height:1px;background:#dcdee2;"></div>
<span class="t " style="left:24.00px;top:758.48px;font-size:14.5px;line-height:20px;color:#2b3541;letter-spacing:-0.070px;">60</span>
<div style="left:48px;top:767px;width:3px;height:3px;background:#2b3541;"></div>
<span class="t " style="left:72.00px;top:758.48px;font-size:14.5px;line-height:20px;color:#2b3541;font-weight:700;letter-spacing:-0.114px;">DrawIndexed</span>
<span class="t " style="left:173.00px;top:758.48px;font-size:14.5px;line-height:20px;color:#5b6470;letter-spacing:-0.604px;">120, 0, 0</span>
<div style="left:0px;top:784px;width:497px;height:1px;background:#cfd1d6;"></div>
<span class="t " style="left:22.00px;top:793.48px;font-size:14.5px;line-height:20px;color:#0f6cc0;font-weight:700;letter-spacing:0.930px;">61</span>
<div style="left:48px;top:802px;width:3px;height:3px;background:#2b3541;"></div>
<span class="t " style="left:72.00px;top:793.48px;font-size:14.5px;line-height:20px;color:#0f6cc0;font-weight:700;letter-spacing:-0.114px;">DrawIndexed</span>
<span class="t " style="left:173.00px;top:793.48px;font-size:14.5px;line-height:20px;color:#4d93d3;letter-spacing:-0.271px;">264, 0, 0</span>
<div style="left:0px;top:819px;width:497px;height:1px;background:#cfd1d6;"></div>
<span class="t " style="left:22.00px;top:828.48px;font-size:14.5px;line-height:20px;color:#0f6cc0;font-weight:700;letter-spacing:0.930px;">62</span>
<div style="left:48px;top:837px;width:3px;height:3px;background:#2b3541;"></div>
<span class="t " style="left:72.00px;top:828.48px;font-size:14.5px;line-height:20px;color:#0f6cc0;font-weight:700;letter-spacing:-0.114px;">DrawIndexed</span>
<span class="t " style="left:173.00px;top:828.48px;font-size:14.5px;line-height:20px;color:#4d93d3;letter-spacing:-0.604px;">120, 0, 0</span>
<div style="left:0px;top:855px;width:497px;height:35px;background:#eeeff3;"></div>
<div style="left:0px;top:854px;width:497px;height:1px;background:#d5d7db;"></div>
<div style="left:0px;top:855px;width:5px;height:35px;background:#45c4b0;"></div>
<span class="t " style="left:60.00px;top:863.48px;font-size:14.5px;line-height:20px;color:#2b3541;font-weight:700;letter-spacing:0.059px;">Render Target</span>
<span class="t " style="left:169.00px;top:863.48px;font-size:14.5px;line-height:20px;color:#5b6470;letter-spacing:-0.646px;">T: 5, T: 10</span>
<div style="left:0px;top:890px;width:497px;height:35px;background:#eeeff3;"></div>
<div style="left:0px;top:889px;width:497px;height:1px;background:#d5d7db;"></div>
<div style="left:0px;top:890px;width:5px;height:35px;background:#45c4b0;"></div>
<span class="t " style="left:60.00px;top:898.48px;font-size:14.5px;line-height:20px;color:#2b3541;font-weight:700;letter-spacing:0.059px;">Render Target</span>
<span class="t " style="left:169.00px;top:898.48px;font-size:14.5px;line-height:20px;color:#5b6470;letter-spacing:-0.485px;">T: 681, T: 684</span>
<svg style="left:48px;top:903px;" width="6" height="10" viewBox="0 0 6 10"><path d="M0.5 0.5 L5.5 5 L0.5 9.5 Z" fill="#2b3541"/></svg>
<div style="left:0px;top:925px;width:497px;height:35px;background:#eeeff3;"></div>
<div style="left:0px;top:924px;width:497px;height:1px;background:#d5d7db;"></div>
<div style="left:0px;top:925px;width:5px;height:35px;background:#45c4b0;"></div>
<span class="t " style="left:60.00px;top:933.48px;font-size:14.5px;line-height:20px;color:#2b3541;font-weight:700;letter-spacing:0.059px;">Render Target</span>
<span class="t " style="left:169.00px;top:933.48px;font-size:14.5px;line-height:20px;color:#5b6470;letter-spacing:-0.646px;">T: 5, T: 10</span>
<div style="left:0px;top:960px;width:497px;height:35px;background:#eeeff3;"></div>
<div style="left:0px;top:959px;width:497px;height:1px;background:#d5d7db;"></div>
<div style="left:0px;top:960px;width:5px;height:35px;background:#45c4b0;"></div>
<span class="t " style="left:60.00px;top:968.48px;font-size:14.5px;line-height:20px;color:#0f6cc0;font-weight:700;letter-spacing:0.059px;">Render Target</span>
<span class="t " style="left:169.00px;top:968.48px;font-size:14.5px;line-height:20px;color:#4d93d3;letter-spacing:-0.628px;">T: 684, T: 771</span>
<svg style="left:44px;top:976px;" width="11" height="6" viewBox="0 0 11 6"><path d="M0.5 0.5 H10.5 L5.5 5.5 Z" fill="#2b3541"/></svg>
<div style="left:0px;top:995px;width:497px;height:10px;background:#f7f8fa;"></div>
<div style="left:0px;top:994px;width:497px;height:1px;background:#d5d7db;"></div>
<div style="left:500px;top:471px;width:14px;height:5px;background:#45c4b0;"></div>
<div style="left:500px;top:480px;width:14px;height:5px;background:#45c4b0;"></div>
<div style="left:500px;top:488px;width:14px;height:5px;background:#45c4b0;"></div>
<div style="left:500px;top:497px;width:14px;height:5px;background:#cdcfd4;"></div>
<div style="left:500px;top:523px;width:14px;height:5px;background:#cdcfd4;"></div>
<div style="left:500px;top:532px;width:14px;height:5px;background:#cdcfd4;"></div>
<div style="left:500px;top:541px;width:14px;height:5px;background:#cdcfd4;"></div>
<div style="left:500px;top:550px;width:14px;height:5px;background:#cdcfd4;"></div>
<div style="left:500px;top:567px;width:14px;height:5px;background:#cdcfd4;"></div>
<div style="left:500px;top:585px;width:14px;height:5px;background:#cdcfd4;"></div>
<div style="left:500px;top:594px;width:14px;height:5px;background:#cdcfd4;"></div>
<div style="left:500px;top:602px;width:14px;height:5px;background:#cdcfd4;"></div>
<div style="left:500px;top:611px;width:14px;height:5px;background:#cdcfd4;"></div>
<div style="left:500px;top:620px;width:14px;height:5px;background:#cdcfd4;"></div>
<div style="left:500px;top:629px;width:14px;height:5px;background:#cdcfd4;"></div>
<div style="left:500px;top:637px;width:14px;height:5px;background:#cdcfd4;"></div>
<div style="left:500px;top:655px;width:14px;height:5px;background:#cdcfd4;"></div>
<div style="left:500px;top:664px;width:14px;height:5px;background:#cdcfd4;"></div>
<div style="left:500px;top:673px;width:14px;height:5px;background:#cdcfd4;"></div>
<div style="left:500px;top:681px;width:14px;height:5px;background:#cdcfd4;"></div>
<div style="left:500px;top:690px;width:14px;height:5px;background:#cdcfd4;"></div>
<div style="left:500px;top:699px;width:14px;height:5px;background:#cdcfd4;"></div>
<div style="left:500px;top:708px;width:14px;height:5px;background:#cdcfd4;"></div>
<div style="left:500px;top:716px;width:14px;height:5px;background:#cdcfd4;"></div>
<div style="left:500px;top:725px;width:14px;height:5px;background:#cdcfd4;"></div>
<div style="left:500px;top:751px;width:14px;height:5px;background:#cdcfd4;"></div>
<div style="left:500px;top:760px;width:14px;height:5px;background:#cdcfd4;"></div>
<div style="left:500px;top:769px;width:14px;height:5px;background:#45c4b0;"></div>
<div style="left:500px;top:778px;width:14px;height:5px;background:#45c4b0;"></div>
<div style="left:500px;top:787px;width:14px;height:5px;background:#45c4b0;"></div>
<div style="left:500px;top:795px;width:14px;height:5px;background:#cdcfd4;"></div>
<div style="left:500px;top:822px;width:14px;height:5px;background:#cdcfd4;"></div>
<div style="left:500px;top:830px;width:14px;height:5px;background:#cdcfd4;"></div>
<div style="left:500px;top:839px;width:14px;height:5px;background:#cdcfd4;"></div>
<div style="left:500px;top:848px;width:14px;height:5px;background:#cdcfd4;"></div>
<div style="left:500px;top:857px;width:14px;height:5px;background:#45c4b0;"></div>
<div style="left:500px;top:865px;width:14px;height:5px;background:#45c4b0;"></div>
<div style="left:500px;top:874px;width:14px;height:5px;background:#45c4b0;"></div>
<div style="left:500px;top:883px;width:14px;height:5px;background:#cdcfd4;"></div>
<div style="left:500px;top:909px;width:14px;height:5px;background:#cdcfd4;"></div>
<div style="left:500px;top:918px;width:14px;height:5px;background:#cdcfd4;"></div>
<div style="left:500px;top:927px;width:14px;height:5px;background:#cdcfd4;"></div>
<div style="left:500px;top:936px;width:14px;height:5px;background:#cdcfd4;"></div>
<div style="left:500px;top:944px;width:14px;height:5px;background:#cdcfd4;"></div>
<div style="left:500px;top:953px;width:14px;height:5px;background:#45c4b0;"></div>
<div style="left:500px;top:962px;width:14px;height:5px;background:#45c4b0;"></div>
<div style="left:500px;top:971px;width:14px;height:5px;background:#45c4b0;"></div>
<div style="left:500px;top:979px;width:14px;height:5px;background:#45c4b0;"></div>
<div style="left:500px;top:988px;width:14px;height:5px;background:#45c4b0;"></div>
<div style="left:508.5px;top:668px;width:3px;height:134px;background:#0a6cc4;"></div>
<div style="left:520px;top:368px;width:923px;height:1px;background:#c9cbd0;"></div>
<div style="left:554px;top:334px;width:1px;height:34px;background:#c9cbd0;"></div>
<div style="left:589px;top:334px;width:1px;height:34px;background:#c9cbd0;"></div>
<div style="left:1257px;top:334px;width:1px;height:34px;background:#c9cbd0;"></div>
<svg style="left:527px;top:343px;" width="20" height="16" viewBox="0 0 20 16"><path d="M8.2 1.2 L1.6 7.8 L8.2 14.4 M1.6 7.8 H20" fill="none" stroke="#2b3541" stroke-width="2.3"/></svg>
<svg style="left:562px;top:343px;" width="20" height="16" viewBox="0 0 20 16"><path d="M11.8 1.2 L18.4 7.8 L11.8 14.4 M18.4 7.8 H0" fill="none" stroke="#c9cbd0" stroke-width="2.3"/></svg>
<span class="t " style="left:600.00px;top:341.98px;font-size:14.5px;line-height:20px;color:#2b3541;letter-spacing:0.487px;-webkit-text-stroke:0.35px currentColor;">Multiple selection</span>
<svg style="left:733px;top:346px;" width="8" height="11" viewBox="0 0 8 11"><path d="M1.5 1 L6 5.5 L1.5 10" fill="none" stroke="#2b3541" stroke-width="1.4"/></svg>
<span class="t " style="left:755.00px;top:341.98px;font-size:14.5px;line-height:20px;color:#2b3541;letter-spacing:0.125px;-webkit-text-stroke:0.35px currentColor;">Geometry:1</span>
<svg style="left:1266px;top:342px;" width="20" height="20" viewBox="0 0 20 20"><path d="M10 1 L19 6 L10 11 L1 6 Z" fill="#2b3541"/><path d="M1.6 9.6 L10 14.2 L18.4 9.6" fill="none" stroke="#2b3541" stroke-width="1.6"/><path d="M1.6 13.4 L10 18 L18.4 13.4" fill="none" stroke="#2b3541" stroke-width="1.6"/></svg>
<span class="t " style="left:1294.00px;top:341.98px;font-size:14.5px;line-height:20px;color:#2b3541;letter-spacing:-0.095px;">Show Resource Table</span>
<div style="left:520px;top:403px;width:280px;height:1px;background:#c9cbd0;"></div>
<span class="t " style="left:530.00px;top:376.98px;font-size:14.5px;line-height:20px;color:#a9b3c1;letter-spacing:0.136px;">Type filter expression</span>
<svg style="left:772px;top:375px;" width="20" height="21" viewBox="0 0 20 21"><circle cx="8.3" cy="8.3" r="6.8" fill="none" stroke="#2b3541" stroke-width="1.4"/><path d="M13.2 13.4 L18.6 19" stroke="#2b3541" stroke-width="2.2" stroke-linecap="round"/></svg>
<div style="left:803px;top:403px;width:640px;height:1px;background:#c9cbd0;"></div>
<div style="left:979px;top:369px;width:1px;height:34px;background:#c9cbd0;"></div>
<div style="left:1156px;top:369px;width:1px;height:34px;background:#c9cbd0;"></div>
<div style="left:1373px;top:369px;width:1px;height:34px;background:#c9cbd0;"></div>
<div style="left:1408px;top:369px;width:1px;height:34px;background:#c9cbd0;"></div>
<svg style="left:813px;top:376px;" width="20" height="19" viewBox="0 0 20 19"><path d="M10 10.4 L19.4 14.6 L10 18.8 L0.6 14.6 Z" fill="#5d6b7a"/><path d="M10 15 V3.4" stroke="#2b3541" stroke-width="2.8"/><path d="M5.2 6.6 L10 1.8 L14.8 6.6" fill="none" stroke="#2b3541" stroke-width="2.8"/></svg>
<span class="t " style="left:843.00px;top:376.98px;font-size:14.5px;line-height:20px;color:#2b3541;letter-spacing:0.288px;">Normals</span>
<svg style="left:964.5px;top:384.6px;" width="9" height="6" viewBox="0 0 9 6"><path d="M0 0 H9 L4.5 5.6 Z" fill="#2b3541"/></svg>
<span class="t " style="left:990.00px;top:376.98px;font-size:14.5px;line-height:20px;color:#2b3541;letter-spacing:0.127px;">Post-transform mesh</span>
<svg style="left:1141.5px;top:384.6px;" width="9" height="6" viewBox="0 0 9 6"><path d="M0 0 H9 L4.5 5.6 Z" fill="#2b3541"/></svg>
<svg style="left:1381px;top:375.5px;" width="20" height="20" viewBox="0 0 20 20"><path d="M5.8 8.35 H1.35 V18.5 H18.65 V8.35 H14.2" fill="none" stroke="#2b3541" stroke-width="2.5"/><rect x="8.85" y="5" width="2.3" height="10.9" fill="#2b3541"/><path d="M5.2 5.9 L10 0.8 L14.8 5.9 Z" fill="#2b3541"/></svg>
<span class="t " style="left:1417.30px;top:370.03px;font-size:23px;line-height:32px;color:#2b3541;font-weight:700;">f</span>
<span class="t " style="left:1424.90px;top:375.26px;font-size:18px;line-height:25px;color:#2b3541;font-weight:700;">x</span>
<span class="t " style="left:533.00px;top:424.98px;font-size:14.5px;line-height:20px;color:#2b3541;letter-spacing:-0.257px;-webkit-text-stroke:0.35px currentColor;">Resources</span>
<div style="left:618px;top:417px;width:35px;height:35px;background:#c9ccd1;"></div>
<div style="left:618px;top:417px;width:35px;height:3px;background:#f6b26b;"></div>
<span class="t " style="left:629.00px;top:425.98px;font-size:14.5px;line-height:20px;color:#2b3541;letter-spacing:0.453px;-webkit-text-stroke:0.35px currentColor;">In</span>
<div style="left:654px;top:417px;width:35px;height:35px;background:#c9ccd1;"></div>
<div style="left:654px;top:417px;width:35px;height:3px;background:#a8dd72;"></div>
<span class="t " style="left:660.00px;top:425.98px;font-size:14.5px;line-height:20px;color:#2b3541;letter-spacing:-0.667px;-webkit-text-stroke:0.35px currentColor;">Exe</span>
<div style="left:690px;top:417px;width:35px;height:35px;background:#c9ccd1;"></div>
<div style="left:690px;top:417px;width:35px;height:3px;background:#ac8fdc;"></div>
<span class="t " style="left:695.00px;top:425.98px;font-size:14.5px;line-height:20px;color:#2b3541;letter-spacing:0.542px;-webkit-text-stroke:0.35px currentColor;">Out</span>
<div style="left:738px;top:404px;width:1px;height:59px;background:#c9cbd0;"></div>
<div style="left:752px;top:417px;width:35px;height:34px;background:#f7f8fa;"></div>
<div style="left:752px;top:451px;width:35px;height:1px;background:#d5d7db;"></div>
<svg style="left:761px;top:425px;" width="18" height="18" viewBox="0 0 18 18"><path d="M1.2 1.5 H16.8 L10.8 9.4 V16.6 L7.2 15.6 V9.4 Z" fill="none" stroke="#2b3541" stroke-width="1.4" stroke-linejoin="round"/></svg>
<div style="left:520px;top:463px;width:280px;height:1px;background:#c9cbd0;"></div>
<div style="left:520px;top:464px;width:280px;height:537px;background:#f7f8fa;"></div>
<div style="left:520px;top:464px;width:5px;height:245px;background:#a8dd72;"></div>
<div style="left:520px;top:709px;width:5px;height:292px;background:#ac8fdc;"></div>
<div style="left:525px;top:464px;width:275px;height:34px;background:#eeeff3;"></div>
<div style="left:525px;top:498px;width:275px;height:1px;background:#c9cbd0;"></div>
<span class="t " style="left:535.00px;top:472.98px;font-size:14.5px;line-height:20px;color:#2b3541;letter-spacing:0.146px;-webkit-text-stroke:0.35px currentColor;">Execution</span>
<div style="left:525px;top:533px;width:275px;height:1px;background:#c9cbd0;"></div>
<div style="left:560px;top:499px;width:1px;height:34px;background:#c9cbd0;"></div>
<span class="t " style="left:571.00px;top:507.48px;font-size:14.5px;line-height:20px;color:#2b3541;letter-spacing:-0.065px;">Arguments:85</span>
<span class="t " style="left:535.00px;top:502.92px;font-size:19px;line-height:27px;color:#2b3541;font-weight:700;">f</span>
<span class="t " style="left:543.00px;top:507.98px;font-size:14.5px;line-height:20px;color:#2b3541;font-weight:700;">x</span>
<div style="left:525px;top:568px;width:275px;height:1px;background:#c9cbd0;"></div>
<div style="left:560px;top:534px;width:1px;height:34px;background:#c9cbd0;"></div>
<span class="t " style="left:571.00px;top:542.48px;font-size:14.5px;line-height:20px;color:#2b3541;letter-spacing:-0.065px;">Arguments:86</span>
<span class="t " style="left:535.00px;top:537.92px;font-size:19px;line-height:27px;color:#2b3541;font-weight:700;">f</span>
<span class="t " style="left:543.00px;top:542.98px;font-size:14.5px;line-height:20px;color:#2b3541;font-weight:700;">x</span>
<div style="left:525px;top:603px;width:275px;height:1px;background:#c9cbd0;"></div>
<div style="left:560px;top:569px;width:1px;height:34px;background:#c9cbd0;"></div>
<span class="t " style="left:571.00px;top:577.48px;font-size:14.5px;line-height:20px;color:#2b3541;letter-spacing:-0.065px;">Arguments:87</span>
<span class="t " style="left:535.00px;top:572.92px;font-size:19px;line-height:27px;color:#2b3541;font-weight:700;">f</span>
<span class="t " style="left:543.00px;top:577.98px;font-size:14.5px;line-height:20px;color:#2b3541;font-weight:700;">x</span>
<div style="left:525px;top:638px;width:275px;height:1px;background:#c9cbd0;"></div>
<div style="left:560px;top:604px;width:1px;height:34px;background:#c9cbd0;"></div>
<span class="t " style="left:571.00px;top:612.48px;font-size:14.5px;line-height:20px;color:#2b3541;letter-spacing:-0.065px;">Arguments:88</span>
<span class="t " style="left:535.00px;top:607.92px;font-size:19px;line-height:27px;color:#2b3541;font-weight:700;">f</span>
<span class="t " style="left:543.00px;top:612.98px;font-size:14.5px;line-height:20px;color:#2b3541;font-weight:700;">x</span>
<div style="left:525px;top:673px;width:275px;height:1px;background:#c9cbd0;"></div>
<div style="left:560px;top:639px;width:1px;height:34px;background:#c9cbd0;"></div>
<span class="t " style="left:571.00px;top:647.48px;font-size:14.5px;line-height:20px;color:#2b3541;letter-spacing:-0.688px;">SH:4</span>
<svg style="left:533px;top:646px;" width="20" height="20" viewBox="0 0 20 20"><rect x="6.5" y="0.5" width="7" height="5.5" fill="#2b3541"/><rect x="0.5" y="15" width="6" height="4.5" fill="#2b3541"/><rect x="13.5" y="15" width="6" height="4.5" fill="#2b3541"/><path d="M10 6 V9 M3.5 15 V12.5 L10 8.6 L16.5 12.5 V15" fill="none" stroke="#2b3541" stroke-width="1.6"/><path d="M6.6 10.4 L10 8.4 L13.4 10.4 L10 12.6 Z" fill="#2b3541"/></svg>
<div style="left:525px;top:708px;width:275px;height:1px;background:#c9cbd0;"></div>
<div style="left:560px;top:674px;width:1px;height:34px;background:#c9cbd0;"></div>
<span class="t " style="left:571.00px;top:682.48px;font-size:14.5px;line-height:20px;color:#2b3541;letter-spacing:-0.272px;">State</span>
<svg style="left:534px;top:681px;" width="18" height="21" viewBox="0 0 18 21"><path d="M1 1 H17 V15.5 L12.5 20 H1 Z" fill="none" stroke="#2b3541" stroke-width="1.5"/><text x="3" y="6.8" font-family="Liberation Mono,monospace" font-size="5" fill="#2b3541">110</text><text x="3" y="12.2" font-family="Liberation Mono,monospace" font-size="5" fill="#2b3541">010</text><text x="3" y="17.6" font-family="Liberation Mono,monospace" font-size="5" fill="#2b3541">11</text></svg>
<div style="left:525px;top:709px;width:275px;height:34px;background:#eeeff3;"></div>
<div style="left:525px;top:743px;width:275px;height:1px;background:#c9cbd0;"></div>
<span class="t " style="left:535.00px;top:717.98px;font-size:14.5px;line-height:20px;color:#2b3541;letter-spacing:0.661px;-webkit-text-stroke:0.35px currentColor;">Output</span>
<div style="left:560px;top:744px;width:240px;height:34px;background:#e1e2e7;"></div>
<div style="left:525px;top:778px;width:275px;height:1px;background:#c9cbd0;"></div>
<div style="left:560px;top:744px;width:1px;height:34px;background:#c9cbd0;"></div>
<span class="t " style="left:571.00px;top:752.48px;font-size:14.5px;line-height:20px;color:#0f6cc0;letter-spacing:-0.075px;">Geometry:1</span>
<div style="left:525px;top:744px;width:35px;height:34px;background:#000;"></div>
<svg style="left:533px;top:752px;" width="20" height="16" viewBox="0 0 20 16"><path d="M1 6 L5 2.5 L11 1.5 L16 3 L18 6 L16 9 L11 10 L9 13 L6 13 L5 10 L2 9 Z" fill="#6f6f6f"/><path d="M5 4 L11 3 L15 5 L11 7 L6 7 Z" fill="#a0a0a0"/></svg>
<div style="left:525px;top:813px;width:275px;height:1px;background:#c9cbd0;"></div>
<div style="left:560px;top:779px;width:1px;height:34px;background:#c9cbd0;"></div>
<span class="t " style="left:571.00px;top:787.48px;font-size:14.5px;line-height:20px;color:#2b3541;letter-spacing:-0.075px;">Geometry:1</span>
<div style="left:525px;top:779px;width:35px;height:34px;background:#000;"></div>
<div style="left:540px;top:793px;width:1px;height:1px;background:#ddd;"></div>
<div style="left:543px;top:792px;width:1px;height:1px;background:#ddd;"></div>
<div style="left:551px;top:798px;width:1px;height:1px;background:#ddd;"></div>
<div style="left:541px;top:800px;width:2px;height:1px;background:#ddd;"></div>
<div style="left:525px;top:848px;width:275px;height:1px;background:#c9cbd0;"></div>
<div style="left:560px;top:814px;width:1px;height:34px;background:#c9cbd0;"></div>
<span class="t " style="left:571.00px;top:822.48px;font-size:14.5px;line-height:20px;color:#2b3541;letter-spacing:-0.075px;">Geometry:1</span>
<div style="left:525px;top:814px;width:35px;height:34px;background:#000;"></div>
<div style="left:525px;top:883px;width:275px;height:1px;background:#c9cbd0;"></div>
<div style="left:560px;top:849px;width:1px;height:34px;background:#c9cbd0;"></div>
<span class="t " style="left:571.00px;top:857.48px;font-size:14.5px;line-height:20px;color:#2b3541;letter-spacing:-0.292px;">T:19 (DSV)</span>
<div style="left:525px;top:849px;width:35px;height:34px;background:radial-gradient(ellipse at 50% 75%,#8a8a8a 0,#6a6a6a 45%,#3a3a3a 80%,#1c1c1c 100%);"></div>
<svg style="left:525px;top:849px;" width="35" height="34" viewBox="0 0 35 34"><path d="M5 33 V20 Q6 14 12 13 L23 13 Q29 14 30 20 V33 Z" fill="#8c8c8c"/><path d="M12 13 L13 18 L15 13 L16 19 L18 13 L19 18 L21 13 L22 17 L23 13 Z" fill="#e4e4e4"/></svg>
<div style="left:525px;top:918px;width:275px;height:1px;background:#c9cbd0;"></div>
<div style="left:560px;top:884px;width:1px;height:34px;background:#c9cbd0;"></div>
<span class="t " style="left:571.00px;top:892.48px;font-size:14.5px;line-height:20px;color:#2b3541;letter-spacing:-0.446px;">T:488 (RTV)</span>
<div style="left:525px;top:884px;width:35px;height:34px;background:#ff00ff;"></div>
<svg style="left:525px;top:884px;" width="35" height="34" viewBox="0 0 35 34"><path d="M1 14 L3 10 L4 22 L2 32 L0 32 V20 Z M8 12 L11 10 L12 16 L9 27 L7 30 L8 20 Z M17 12 L22 9 L26 10 L27 18 L25 30 L23 22 L21 30 L19 22 L17 26 Z M30 11 L35 9 V28 L31 30 L32 20 Z" fill="#fff"/></svg>
<div style="left:525px;top:953px;width:275px;height:1px;background:#c9cbd0;"></div>
<div style="left:560px;top:919px;width:1px;height:34px;background:#c9cbd0;"></div>
<span class="t " style="left:571.00px;top:927.48px;font-size:14.5px;line-height:20px;color:#2b3541;letter-spacing:-0.271px;">T:684 (DSV)</span>
<div style="left:525px;top:919px;width:35px;height:34px;background:#fff;"></div>
<div style="left:531px;top:945px;width:2px;height:1px;background:#333;"></div>
<div style="left:550px;top:945px;width:3px;height:1px;background:#333;"></div>
<div style="left:548px;top:934px;width:1px;height:2px;background:#888;"></div>
<div style="left:525px;top:988px;width:275px;height:1px;background:#c9cbd0;"></div>
<div style="left:560px;top:954px;width:1px;height:34px;background:#c9cbd0;"></div>
<span class="t " style="left:571.00px;top:962.48px;font-size:14.5px;line-height:20px;color:#2b3541;letter-spacing:-0.446px;">T:771 (RTV)</span>
<div style="left:525px;top:954px;width:35px;height:34px;background:#fff;"></div>
<div style="left:531px;top:979px;width:2px;height:1px;background:#ff40ff;"></div>
<div style="left:538px;top:976px;width:2px;height:1px;background:#ff40ff;"></div>
<div style="left:547px;top:978px;width:2px;height:1px;background:#ff40ff;"></div>
<div style="left:550px;top:973px;width:2px;height:1px;background:#ff40ff;"></div>
<div style="left:551px;top:980px;width:2px;height:1px;background:#ff40ff;"></div>
<div style="left:541px;top:974px;width:2px;height:1px;background:#ff40ff;"></div>
<div style="left:525px;top:1023px;width:275px;height:1px;background:#c9cbd0;"></div>
<div style="left:560px;top:989px;width:1px;height:34px;background:#c9cbd0;"></div>
<div style="left:525px;top:989px;width:35px;height:34px;background:#fff;"></div>
<div style="left:792px;top:939px;width:3px;height:51px;background:#0a6cc4;"></div>
<div style="left:1466px;top:351px;width:378px;height:35px;background:#f7f8fa;"></div>
<span class="t " style="left:1477.00px;top:358.98px;font-size:14.5px;line-height:20px;color:#a9b3c1;letter-spacing:0.136px;">Type filter expression</span>
<svg style="left:1816px;top:359px;" width="20" height="21" viewBox="0 0 20 21"><circle cx="8.3" cy="8.3" r="6.8" fill="none" stroke="#a3abb7" stroke-width="1.4"/><path d="M13.2 13.4 L18.6 19" stroke="#a3abb7" stroke-width="2.2" stroke-linecap="round"/></svg>
<div style="left:1865px;top:351px;width:35px;height:34px;background:#f7f8fa;"></div>
<div style="left:1865px;top:385px;width:35px;height:1px;background:#d5d7db;"></div>
<svg style="left:1873px;top:358px;" width="20" height="20" viewBox="0 0 20 20"><path d="M5.8 8.35 H1.35 V18.5 H18.65 V8.35 H14.2" fill="none" stroke="#2b3541" stroke-width="2.5"/><rect x="8.85" y="5" width="2.3" height="10.9" fill="#2b3541"/><path d="M5.2 5.9 L10 0.8 L14.8 5.9 Z" fill="#2b3541"/></svg>
<div style="left:1447px;top:403px;width:472px;height:1px;background:#c9cbd0;"></div>
<div style="left:1447px;top:404px;width:157px;height:59px;background:#f7f8fa;"></div>
<div style="left:1447px;top:404px;width:157px;height:3px;background:#0a6cc4;"></div>
<span class="t " style="left:1486.00px;top:425.48px;font-size:14.5px;line-height:20px;color:#2b3541;letter-spacing:0.276px;-webkit-text-stroke:0.35px currentColor;">Bottlenecks</span>
<span class="t " style="left:1659.00px;top:415.98px;font-size:14.5px;line-height:20px;color:#2b3541;letter-spacing:0.181px;">Metrics</span>
<span class="t " style="left:1648.00px;top:433.98px;font-size:14.5px;line-height:20px;color:#2b3541;letter-spacing:0.062px;">(Selection)</span>
<span class="t " style="left:1817.00px;top:415.98px;font-size:14.5px;line-height:20px;color:#2b3541;letter-spacing:0.181px;">Metrics</span>
<span class="t " style="left:1815.75px;top:433.98px;font-size:14.5px;line-height:20px;color:#2b3541;letter-spacing:-0.152px;">(Frame)</span>
<div style="left:1447px;top:463px;width:472px;height:126px;background:#cfd1d6;"></div>
<svg style="left:1457px;top:474px;" width="14" height="17" viewBox="0 0 14 17"><path d="M7.4 1 C8.6 3.6 12.8 6 12.8 10.4 C12.8 13.8 10.2 16 7 16 C3.8 16 1.2 13.8 1.2 10.6 C1.2 8.4 2.4 7 3 5.4 C4 6.4 4.4 7.4 4.4 8.6 C6.2 7 7.8 4 7.4 1 Z" fill="none" stroke="#f0444c" stroke-width="1.7" stroke-linejoin="round"/><path d="M7 11.2 C8.4 12.2 8.8 13.8 7.8 15.4 M7 11.2 C5.6 12.4 5.4 13.8 6.2 15.4" fill="none" stroke="#f0444c" stroke-width="1.2"/></svg>
<span class="t " style="left:1481.00px;top:472.98px;font-size:14.5px;line-height:20px;color:#0f6cc0;letter-spacing:0.047px;">Graphics Front-End: Geometry or Command Streamer</span>
<span class="t " style="left:1481.00px;top:500.48px;font-size:14.5px;line-height:20px;color:#2b3541;font-weight:700;letter-spacing:0.094px;">Bottleneck:</span>
<span class="t " style="left:1565.00px;top:500.48px;font-size:14.5px;line-height:20px;color:#2b3541;letter-spacing:0.250px;">The primary bottleneck is in geometry</span>
<span class="t " style="left:1481.00px;top:520.48px;font-size:14.5px;line-height:20px;color:#2b3541;letter-spacing:0.161px;">transformation stages. Optimize shaders, reduce the number of</span>
<span class="t " style="left:1481.00px;top:540.48px;font-size:14.5px;line-height:20px;color:#2b3541;letter-spacing:0.230px;">off-screen polygons generated from shading, batch draws and</span>
<span class="t " style="left:1481.00px;top:560.48px;font-size:14.5px;line-height:20px;color:#2b3541;letter-spacing:-0.001px;">reduce unnecessary state changes between them.</span>
<span class="t " style="left:1809.50px;top:560.48px;font-size:14.5px;line-height:20px;color:#0f6cc0;letter-spacing:0.450px;text-decoration:underline;">More info</span>
<div style="left:1447px;top:589px;width:472px;height:69px;background:#e1e2e7;"></div>
<div style="left:1447px;top:623px;width:472px;height:1px;background:#c9cbd0;"></div>
<span class="t " style="left:1466.00px;top:597.48px;font-size:14.5px;line-height:20px;color:#2b3541;font-weight:700;letter-spacing:0.380px;">Name (Units)</span>
<span class="t " style="left:1697.00px;top:597.48px;font-size:14.5px;line-height:20px;color:#2b3541;font-weight:700;letter-spacing:0.089px;">Current</span>
<span class="t " style="left:1770.00px;top:597.48px;font-size:14.5px;line-height:20px;color:#2b3541;font-weight:700;letter-spacing:0.025px;">Original</span>
<span class="t " style="left:1850.00px;top:597.48px;font-size:14.5px;line-height:20px;color:#2b3541;font-weight:700;letter-spacing:0.190px;">Delta%</span>
<svg style="left:1842px;top:601px;" width="5" height="9" viewBox="0 0 5 9"><path d="M4.5 0.5 L0.5 4.5 L4.5 8.5 Z" fill="#2b3541"/></svg>
<svg style="left:1905px;top:601px;" width="5" height="9" viewBox="0 0 5 9"><path d="M0.5 0.5 L4.5 4.5 L0.5 8.5 Z" fill="#2b3541"/></svg>
<span class="t " style="left:1476.00px;top:630.98px;font-size:14.5px;line-height:20px;color:#2b3541;font-weight:700;letter-spacing:0.154px;">GPU/Thread Dispatcher</span>
<div style="left:1447px;top:658px;width:472px;height:105px;background:#f7f8fa;"></div>
<span class="t " style="left:1476.00px;top:665.98px;font-size:14.5px;line-height:20px;color:#2b3541;letter-spacing:-0.114px;">NonPS Thread Ready For Di...</span>
<span class="t " style="left:1678.00px;top:665.98px;font-size:14.5px;line-height:20px;color:#2b3541;">%</span>
<span class="t " style="left:1733.50px;top:665.98px;font-size:14.5px;line-height:20px;color:#2b3541;letter-spacing:-0.434px;">1,98</span>
<span class="t " style="left:1803.50px;top:665.98px;font-size:14.5px;line-height:20px;color:#2b3541;letter-spacing:-0.434px;">1,98</span>
<span class="t " style="left:1891.92px;top:665.98px;font-size:14.5px;line-height:20px;color:#2b3541;">0</span>
<span class="t " style="left:1476.00px;top:700.98px;font-size:14.5px;line-height:20px;color:#2b3541;letter-spacing:-0.114px;">NonPS Thread Ready For Di...</span>
<span class="t " style="left:1678.00px;top:700.98px;font-size:14.5px;line-height:20px;color:#2b3541;">%</span>
<span class="t " style="left:1733.50px;top:700.98px;font-size:14.5px;line-height:20px;color:#2b3541;letter-spacing:-0.434px;">1,92</span>
<span class="t " style="left:1803.50px;top:700.98px;font-size:14.5px;line-height:20px;color:#2b3541;letter-spacing:-0.434px;">1,92</span>
<span class="t " style="left:1891.92px;top:700.98px;font-size:14.5px;line-height:20px;color:#2b3541;">0</span>
<span class="t " style="left:1476.00px;top:735.98px;font-size:14.5px;line-height:20px;color:#2b3541;letter-spacing:-0.114px;">NonPS Thread Ready For Di...</span>
<span class="t " style="left:1678.00px;top:735.98px;font-size:14.5px;line-height:20px;color:#2b3541;">%</span>
<span class="t " style="left:1733.50px;top:735.98px;font-size:14.5px;line-height:20px;color:#2b3541;letter-spacing:-0.434px;">1,51</span>
<span class="t " style="left:1803.50px;top:735.98px;font-size:14.5px;line-height:20px;color:#2b3541;letter-spacing:-0.434px;">1,51</span>
<span class="t " style="left:1891.92px;top:735.98px;font-size:14.5px;line-height:20px;color:#2b3541;">0</span>
<div style="left:1447px;top:763px;width:472px;height:1px;background:#c9cbd0;"></div>
<div style="left:1447px;top:764px;width:472px;height:167px;background:#f7f8fa;"></div>
<div style="left:1447px;top:931px;width:472px;height:1px;background:#c9cbd0;"></div>
<div style="left:1466px;top:949px;width:35px;height:34px;background:#f3f4f7;"></div>
<div style="left:1466px;top:983px;width:35px;height:1px;background:#d5d7db;"></div>
<div style="left:1504px;top:949px;width:35px;height:34px;background:#f3f4f7;"></div>
<div style="left:1504px;top:983px;width:35px;height:1px;background:#d5d7db;"></div>
<div style="left:1542px;top:949px;width:35px;height:34px;background:#f3f4f7;"></div>
<div style="left:1542px;top:983px;width:35px;height:1px;background:#d5d7db;"></div>
<div style="left:1580px;top:949px;width:35px;height:34px;background:#f3f4f7;"></div>
<div style="left:1580px;top:983px;width:35px;height:1px;background:#d5d7db;"></div>
<svg style="left:1474px;top:957px;" width="20" height="20" viewBox="0 0 20 20"><rect x="0.8" y="0.8" width="18.4" height="18.4" fill="#f7f8fa" stroke="#2b3541" stroke-width="1.4"/><rect x="0.5" y="0.5" width="9.5" height="9.5" fill="#2b3541"/><rect x="10" y="10" width="9.5" height="9.5" fill="#2b3541"/></svg>
<span class="t " style="left:1513.00px;top:958.65px;font-size:14px;line-height:20px;color:#2b3541;">P</span>
<span class="t " style="left:1521.00px;top:958.65px;font-size:14px;line-height:20px;color:#2b3541;">S</span>
<svg style="left:1512px;top:957px;" width="20" height="20" viewBox="0 0 20 20"><path d="M1.5 2 L17.5 17" stroke="#2b3541" stroke-width="1.4"/></svg>
<svg style="left:1550px;top:957px;" width="20" height="20" viewBox="0 0 20 20"><path d="M1.2 19.5 V1.2 H19.5" fill="none" stroke="#2b3541" stroke-width="2.2"/><rect x="4" y="4" width="4.6" height="4.6" fill="#2b3541"/><path d="M18.6 18.6 L10.4 10.4 M10 16 V10 H16" fill="none" stroke="#2b3541" stroke-width="1.5"/></svg>
<svg style="left:1588px;top:957px;" width="20" height="20" viewBox="0 0 20 20"><path d="M1.2 1.2 L18.8 18.8 M18.8 1.2 L1.2 18.8" stroke="#2b3541" stroke-width="1.5"/></svg>
<div style="left:1446px;top:334px;width:474px;height:667px;box-sizing:border-box;border:1px solid #0a6cc4;border-bottom-width:2px;"></div>
<div style="left:803px;top:404px;width:640px;height:597px;background:#000;"></div>
<svg style="left:803px;top:404px" width="640" height="597" viewBox="803 404 640 597" shape-rendering="crispEdges"><defs>
<linearGradient id="roofg" gradientUnits="userSpaceOnUse" x1="1010" y1="720" x2="1200" y2="580"><stop offset="0" stop-color="#6a2cd8"/><stop offset="0.45" stop-color="#8a24d6"/><stop offset="1" stop-color="#b81ccc"/></linearGradient>
<linearGradient id="archg" gradientUnits="userSpaceOnUse" x1="1150" y1="690" x2="1340" y2="720"><stop offset="0" stop-color="#a03070"/><stop offset="0.5" stop-color="#b0285c"/><stop offset="1" stop-color="#c03060"/></linearGradient>
<pattern id="stairp" patternUnits="userSpaceOnUse" width="6" height="4" patternTransform="rotate(-14)"><rect width="6" height="4" fill="#78c430"/><rect y="0" width="6" height="1.2" fill="#b4d458"/><rect y="2.4" width="6" height="1" fill="#54a82c"/><rect x="0" y="1.2" width="1.5" height="1.2" fill="#d8a060"/></pattern>
<pattern id="facp" patternUnits="userSpaceOnUse" width="5" height="9" patternTransform="rotate(-7)"><rect width="5" height="9" fill="#f08a78"/><rect y="0" width="5" height="1.4" fill="#f8a890"/><rect x="0" y="4" width="1.6" height="5" fill="#d86c64"/></pattern>
<pattern id="tealp" patternUnits="userSpaceOnUse" width="4" height="8" patternTransform="rotate(-20)"><rect width="4" height="8" fill="#2a94b4"/><rect y="0" width="4" height="1.4" fill="#38c8c0"/><rect x="0" y="4" width="1.4" height="4" fill="#3068c8"/></pattern>
<radialGradient id="deepv"><stop offset="0" stop-color="#5a1cd2" stop-opacity="0.7"/><stop offset="0.6" stop-color="#5a1cd2" stop-opacity="0.4"/><stop offset="1" stop-color="#5a1cd2" stop-opacity="0"/></radialGradient>
</defs>
<line x1="822" y1="671.2" x2="1223.8" y2="645.2" stroke="#8a8a8a" stroke-width="1"/>
<line x1="1223.8" y1="645.2" x2="1443" y2="707" stroke="#8a8a8a" stroke-width="1"/>
<line x1="822" y1="671.2" x2="803" y2="833.9" stroke="#8a8a8a" stroke-width="1"/>
<line x1="819.8" y1="695.5" x2="1285.6" y2="660.8" stroke="#8a8a8a" stroke-width="1"/>
<line x1="815.6" y1="729.6" x2="1356.2" y2="681.6" stroke="#e00000" stroke-width="1"/>
<line x1="1141" y1="650" x2="1443" y2="768.6" stroke="#8a8a8a" stroke-width="1"/>
<polygon points="976.0,578.0 986.8,570.8 1001.2,635.6 1012.0,675.1 1021.0,739.9 1008.4,739.9 1006.6,721.9 994.0,668.0 978.7,639.2" fill="#6a9c28" />
<polygon points="973.3,549.2 983.2,549.2 982.3,579.8 976.0,576.2" fill="#1a98a8" />
<polygon points="984.1,552.8 1012.0,565.4 982.3,578.0" fill="#3c8c20" />
<polygon points="983.2,610.4 994.0,619.4 1001.2,664.4 992.2,650.0" fill="#28a060" />
<polygon points="991.3,614.0 999.4,601.4 1002.1,660.8 994.0,669.8" fill="#109098" />
<polygon points="1001.2,646.4 1012.0,675.1 1019.2,707.5 1008.4,675.1" fill="#808818" />
<polygon points="1007.5,675.1 1019.2,709.3 1017.4,718.3 1008.4,723.7" fill="#30a048" />
<polygon points="1019.2,671.6 1029.1,665.3 1030.0,703.9 1024.6,737.2 1020.1,721.9" fill="#109098" />
<polygon points="1003.0,718.3 1015.6,712.9 1012.0,720.1" fill="#60f0a8" />
<polygon points="958.0,588.8 962.5,588.8 964.3,658.1 959.8,659.0" fill="#8878f8" />
<polygon points="962.5,590.6 975.1,576.2 976.9,635.6 965.2,646.4" fill="url(#tealp)" />
<polygon points="955.3,587.9 973.3,570.8 975.1,576.2 959.8,589.7" fill="#a02878" />
<polygon points="958.9,598.7 974.2,583.4 975.1,587.0 959.8,602.3" fill="#60e8c0" />
<polygon points="958.9,600.5 974.5,585.2 975.3,589.7 959.4,605.0" fill="#a02878" />
<polygon points="958.0,620.3 976.0,604.1 976.5,607.1 958.5,623.3" fill="#60e8c0" />
<polygon points="958.4,622.1 976.3,605.9 977.1,610.4 958.9,625.7" fill="#a02878" />
<polygon points="963.9,632.0 965.2,630.9 965.5,641.0 964.3,642.0" fill="#e89868" />
<polygon points="966.6,629.6 967.9,628.5 968.2,638.6 967.0,639.7" fill="#e89868" />
<polygon points="969.3,627.3 970.6,626.2 970.9,636.3 969.7,637.4" fill="#e89868" />
<polygon points="972.0,625.0 973.3,623.9 973.6,633.9 972.4,635.0" fill="#e89868" />
<polygon points="974.7,622.6 976.0,621.5 976.3,631.6 975.1,632.7" fill="#e89868" />
<polygon points="964.3,648.2 977.8,637.4 981.7,641.3 968.8,652.1" fill="#38dcc4" />
<polygon points="968.8,651.8 981.4,641.0 1003.0,684.1 1002.1,696.7 992.2,689.5" fill="#28c0b0" />
<polygon points="974.2,650.0 978.7,646.4 1000.3,689.5 996.7,692.2" fill="#2c8cc8" />
<polygon points="990.4,689.5 1002.1,680.5 1003.3,684.1 992.2,693.5" fill="#50e8c8" />
<polygon points="990.4,693.1 999.4,698.5 1008.4,718.3 995.8,720.1 991.3,707.5" fill="#8878f8" />
<polygon points="1003.0,570.0 1030.0,562.0 1070.0,553.6 1099.0,554.0 1129.0,562.0 1150.0,569.0 1177.0,569.5 1184.0,572.5 1195.0,593.5 1213.0,621.0 1222.5,639.6 1234.0,656.5 1248.6,686.0 1213.0,690.0 1181.5,700.4 1150.0,715.0 1118.0,722.4 1087.0,730.0 1047.0,746.0 1032.0,722.0 1024.0,704.6 1009.0,671.0 1001.0,637.5 992.4,608.0 984.0,583.0 980.0,572.0" fill="url(#roofg)" />
<clipPath id="roofclip"><polygon points="1003.0,570.0 1030.0,562.0 1070.0,553.6 1099.0,554.0 1129.0,562.0 1150.0,569.0 1177.0,569.5 1184.0,572.5 1195.0,593.5 1213.0,621.0 1222.5,639.6 1234.0,656.5 1248.6,686.0 1213.0,690.0 1181.5,700.4 1150.0,715.0 1118.0,722.4 1087.0,730.0 1047.0,746.0 1032.0,722.0 1024.0,704.6 1009.0,671.0 1001.0,637.5 992.4,608.0 984.0,583.0 980.0,572.0"/></clipPath><g clip-path="url(#roofclip)">
<polyline points="998.8,581.8 1056.0,566.4 1104.3,563.1 1143.9,573.0 1179.1,584.0" fill="none" stroke="#a42cd4" stroke-width="9" opacity="0.8" stroke-linecap="round" stroke-linejoin="round"/>
<polyline points="1023.0,612.6 1075.8,595.0 1121.9,592.8 1165.9,603.8 1187.9,610.4" fill="none" stroke="#9a2ad2" stroke-width="7" opacity="0.7" stroke-linecap="round" stroke-linejoin="round"/>
<polyline points="1040.6,636.7 1082.3,621.4 1126.3,617.0 1170.3,626.9 1205.5,634.5" fill="none" stroke="#a030d0" stroke-width="8" opacity="0.75" stroke-linecap="round" stroke-linejoin="round"/>
<ellipse cx="1085" cy="680" rx="62" ry="42" fill="url(#deepv)" transform="rotate(-20 1085 680)"/>
<polyline points="1003.2,572.5 1056.0,558.5 1104.3,555.0 1143.9,564.6 1165.9,573.0" fill="none" stroke="#9a78ee" stroke-width="2.6" stroke-linecap="round" stroke-linejoin="round"/>
<polyline points="1005.4,587.3 1060.4,570.8 1108.7,568.1 1148.3,577.8 1176.9,587.3" fill="none" stroke="#7e58ea" stroke-width="1.8" stroke-linecap="round" stroke-linejoin="round"/>
<polyline points="1014.2,602.0 1067.0,585.5 1113.1,583.3 1157.1,594.3 1173.6,598.9" fill="none" stroke="#807cf0" stroke-width="2.4" stroke-linecap="round" stroke-linejoin="round"/>
<polyline points="1037.3,617.4 1078.0,604.2 1121.9,602.0 1165.9,613.0 1178.0,616.5" fill="none" stroke="#807cf0" stroke-width="2.4" stroke-linecap="round" stroke-linejoin="round"/>
<polyline points="1034.0,649.3 1082.3,632.8 1126.3,627.3 1170.3,636.1 1204.4,643.3" fill="none" stroke="#807cf0" stroke-width="2.6" stroke-linecap="round" stroke-linejoin="round"/>
<polyline points="1045.0,628.0 1084.5,614.8 1126.3,611.5 1172.5,621.8 1194.5,627.5" fill="none" stroke="#7a46e2" stroke-width="1.6" stroke-linecap="round" stroke-linejoin="round"/>
<polyline points="1062.6,729.5 1113.1,709.7 1148.3,698.8 1176.9,697.4" fill="none" stroke="#807cf0" stroke-width="2.8" stroke-linecap="round" stroke-linejoin="round"/>
<polyline points="1073.6,733.5 1121.9,713.7 1157.1,703.1 1187.9,696.6" fill="none" stroke="#7450e8" stroke-width="1.6" stroke-linecap="round" stroke-linejoin="round"/>
<polyline points="1143.9,700.5 1157.1,696.6 1172.5,695.7" fill="none" stroke="#9a9af8" stroke-width="2.2" stroke-linecap="round" stroke-linejoin="round"/>
</g>
<polyline points="1041.7,744.9 1084.5,730.4 1119.7,722.9 1148.3,711.5 1176.9,700.9 1220.9,690.4 1251.7,688.2" fill="none" stroke="#a02a86" stroke-width="5.5" stroke-linecap="round" stroke-linejoin="round"/>
<polyline points="1084.5,732.2 1119.7,724.7 1148.3,713.7 1176.9,703.1 1220.9,692.6 1251.7,690.4" fill="none" stroke="#7a5a28" stroke-width="2" stroke-linecap="round" stroke-linejoin="round"/>
<path d="M1003.0 540.0 C1004.8 543.7 1007.6 547.4 1008.5 551.0 C1011.3 554.7 1012.2 558.4 1012.2 560.7 L1015.4 561.2 L1015.4 564.4 L989.2 563.0 L989.2 559.8 L994.3 559.8 C994.3 556.6 995.6 552.9 997.9 550.1 C998.9 546.4 1001.2 542.8 1003.0 540.0 Z" fill="#a2a222"/>
<path d="M1003.0 540.9 L1000.7 559.3 L1004.4 559.8 Z" fill="#c6c43a"/>
<path d="M1004.8 545.5 C1007.6 549.2 1010.4 554.7 1011.7 560.2 L1008.1 560.1 Z" fill="#7c8414"/>
<path d="M989.2 560.2 L1015.4 561.5 L1015.4 564.4 L989.2 563.0 Z" fill="#b8b02e"/>
<path d="M991.0 554.3 L993.3 559.8 L988.7 559.8 Z" fill="#b0a828"/>
<path d="M1149.8 541.0 C1151.7 544.8 1154.6 548.7 1155.6 552.5 C1158.4 556.4 1159.4 560.2 1159.4 562.6 L1162.8 563.1 L1162.8 566.4 L1135.4 565.0 L1135.4 561.6 L1140.7 561.6 C1140.7 558.3 1142.1 554.4 1144.5 551.6 C1145.5 547.7 1147.9 543.9 1149.8 541.0 Z" fill="#a2a222"/>
<path d="M1149.8 542.0 L1147.4 561.2 L1151.2 561.6 Z" fill="#c6c43a"/>
<path d="M1151.7 546.8 C1154.6 550.6 1157.5 556.4 1158.9 562.1 L1155.1 561.9 Z" fill="#7c8414"/>
<path d="M1135.4 562.1 L1162.8 563.5 L1162.8 566.4 L1135.4 565.0 Z" fill="#b8b02e"/>
<path d="M1137.3 555.9 L1139.7 561.6 L1134.9 561.6 Z" fill="#b0a828"/>
<path d="M1025.0 593.4 C1027.0 597.4 1030.0 601.4 1031.0 605.4 C1034.0 609.4 1035.0 613.4 1035.0 615.9 L1038.5 616.4 L1038.5 619.9 L1010.0 618.4 L1010.0 614.9 L1015.5 614.9 C1015.5 611.4 1017.0 607.4 1019.5 604.4 C1020.5 600.4 1023.0 596.4 1025.0 593.4 Z" fill="#a2a222"/>
<path d="M1025.0 594.4 L1022.5 614.4 L1026.5 614.9 Z" fill="#c6c43a"/>
<path d="M1027.0 599.4 C1030.0 603.4 1033.0 609.4 1034.5 615.4 L1030.5 615.2 Z" fill="#7c8414"/>
<path d="M1010.0 615.4 L1038.5 616.8 L1038.5 619.9 L1010.0 618.4 Z" fill="#b8b02e"/>
<path d="M1012.0 608.9 L1014.5 614.9 L1009.5 614.9 Z" fill="#b0a828"/>
<path d="M1050.1 651.1 C1052.3 655.4 1055.5 659.7 1056.6 664.1 C1059.8 668.4 1060.9 672.7 1060.9 675.4 L1064.7 675.9 L1064.7 679.7 L1033.9 678.1 L1033.9 674.3 L1039.8 674.3 C1039.8 670.5 1041.5 666.2 1044.2 663.0 C1045.2 658.7 1047.9 654.3 1050.1 651.1 Z" fill="#a2a222"/>
<path d="M1050.1 652.2 L1047.4 673.8 L1051.7 674.3 Z" fill="#c6c43a"/>
<path d="M1052.3 657.6 C1055.5 661.9 1058.7 668.4 1060.4 674.9 L1056.0 674.6 Z" fill="#7c8414"/>
<path d="M1033.9 674.9 L1064.7 676.4 L1064.7 679.7 L1033.9 678.1 Z" fill="#b8b02e"/>
<path d="M1036.1 667.8 L1038.8 674.3 L1033.4 674.3 Z" fill="#b0a828"/>
<path d="M1078.5 714.0 C1080.3 717.5 1082.9 721.0 1083.8 724.6 C1086.4 728.1 1087.3 731.6 1087.3 733.8 L1090.4 734.2 L1090.4 737.3 L1065.3 736.0 L1065.3 732.9 L1070.1 732.9 C1070.1 729.8 1071.5 726.3 1073.7 723.7 C1074.5 720.2 1076.7 716.6 1078.5 714.0 Z" fill="#a2a222"/>
<path d="M1078.5 714.9 L1076.3 732.5 L1079.8 732.9 Z" fill="#c6c43a"/>
<path d="M1080.3 719.3 C1082.9 722.8 1085.5 728.1 1086.9 733.4 L1083.3 733.2 Z" fill="#7c8414"/>
<path d="M1065.3 733.4 L1090.4 734.6 L1090.4 737.3 L1065.3 736.0 Z" fill="#b8b02e"/>
<path d="M1067.1 727.6 L1069.3 732.9 L1064.9 732.9 Z" fill="#b0a828"/>
<path d="M1178.3 590.3 C1180.2 594.1 1183.1 598.0 1184.1 601.8 C1186.9 605.7 1187.9 609.5 1187.9 611.9 L1191.3 612.4 L1191.3 615.7 L1163.9 614.3 L1163.9 610.9 L1169.2 610.9 C1169.2 607.6 1170.6 603.7 1173.0 600.9 C1174.0 597.0 1176.4 593.2 1178.3 590.3 Z" fill="#a2a222"/>
<path d="M1178.3 591.3 L1175.9 610.5 L1179.7 610.9 Z" fill="#c6c43a"/>
<path d="M1180.2 596.1 C1183.1 599.9 1186.0 605.7 1187.4 611.4 L1183.6 611.2 Z" fill="#7c8414"/>
<path d="M1163.9 611.4 L1191.3 612.8 L1191.3 615.7 L1163.9 614.3 Z" fill="#b8b02e"/>
<path d="M1165.8 605.2 L1168.2 610.9 L1163.4 610.9 Z" fill="#b0a828"/>
<path d="M1210.8 642.7 C1212.7 646.5 1215.6 650.4 1216.6 654.2 C1219.4 658.1 1220.4 661.9 1220.4 664.3 L1223.8 664.8 L1223.8 668.1 L1196.4 666.7 L1196.4 663.3 L1201.7 663.3 C1201.7 660.0 1203.1 656.1 1205.5 653.3 C1206.5 649.4 1208.9 645.6 1210.8 642.7 Z" fill="#a2a222"/>
<path d="M1210.8 643.7 L1208.4 662.9 L1212.2 663.3 Z" fill="#c6c43a"/>
<path d="M1212.7 648.5 C1215.6 652.3 1218.5 658.1 1219.9 663.8 L1216.1 663.6 Z" fill="#7c8414"/>
<path d="M1196.4 663.8 L1223.8 665.2 L1223.8 668.1 L1196.4 666.7 Z" fill="#b8b02e"/>
<path d="M1198.3 657.6 L1200.7 663.3 L1195.9 663.3 Z" fill="#b0a828"/>
<polygon points="1014.5,536.8 1052.2,535.7 1054.3,551.5 1038.6,557.8 1023.9,563.0 1013.4,556.7" fill="#a0a020" />
<polygon points="1013.4,539.9 1020.8,536.8 1021.8,562.0 1012.4,556.7" fill="#f08868" />
<polygon points="1023.9,545.2 1049.1,543.1 1050.1,551.5 1025.0,554.6" fill="#8c9418" />
<polygon points="1099.4,537.8 1135.1,536.8 1137.2,553.6 1128.8,559.9 1095.2,552.5" fill="#a0a020" />
<polygon points="1099.0,539.9 1105.7,537.8 1104.7,553.6 1096.3,552.5" fill="#f08868" />
<polygon points="1107.8,545.2 1133.0,543.5 1134.1,554.6 1124.6,556.7" fill="#8c9418" />
<polygon points="1182.5,549.4 1183.6,578.7 1166.8,563.0" fill="#f88868" />
<polygon points="1212.9,597.6 1214.0,628.0 1201.4,605.0" fill="#f88868" />
<polygon points="1200.3,601.8 1210.8,624.9 1181.5,618.6" fill="#c08c18" />
<polygon points="1197.2,623.8 1209.8,622.8 1207.7,630.1" fill="#d89820" />
<polygon points="1249.7,652.2 1250.3,686.8 1232.9,660.6" fill="#f88868" />
<polygon points="1209.8,672.1 1223.4,667.9 1231.8,684.7" fill="#e06030" />
<polygon points="1012.4,633.3 1032.3,618.6 1030.2,627.0" fill="#705818" />
<polygon points="1000.8,629.1 1015.5,623.8 1012.4,633.3" fill="#78a020" />
<polygon points="1042.8,624.9 1047.0,624.9 1049.1,650.1 1043.8,651.1" fill="#5a3cc8" />
<polygon points="1018.7,673.1 1029.2,665.8 1030.2,729.8 1021.8,729.8" fill="#109098" />
<polygon points="1020.8,720.0 1030.6,720.0 1032.3,732.6 1023.9,735.7" fill="#109098" />
<polygon points="1219.2,720.0 1273.8,726.3 1275.9,741.0 1278.0,789.2 1267.5,791.3 1263.3,803.9 1254.9,845.9 1250.7,858.5 1233.9,866.9 1231.8,864.8 1223.4,843.8 1210.8,803.9 1204.5,791.3 1206.6,757.8 1210.8,728.4" fill="#f0a858" />
<polygon points="1259.1,738.9 1278.4,741.0 1278.4,782.9 1269.6,785.5 1252.8,778.7 1248.6,755.7" fill="#c88a1c" />
<polygon points="1219.2,720.0 1238.1,722.1 1233.9,745.2 1221.3,768.3 1208.7,789.2 1205.0,782.9 1207.1,757.8 1211.3,728.4" fill="#e89848" />
<polygon points="1205.0,745.2 1212.9,743.1 1215.0,776.6 1206.2,778.7" fill="#f08878" />
<polygon points="1212.9,726.3 1221.3,724.2 1220.3,751.5 1212.9,778.7 1210.8,776.6 1214.0,751.5" fill="#88a82c" />
<polygon points="1237.1,726.3 1248.6,726.3 1250.7,757.8 1254.9,780.8 1248.6,782.9 1242.3,757.8" fill="#88a82c" />
<polygon points="1235.0,738.9 1242.3,737.8 1248.6,778.7 1244.4,780.8" fill="#f08878" />
<polygon points="1242.3,789.2 1248.6,787.1 1250.7,837.5 1240.2,841.7 1238.1,808.1" fill="#f08878" />
<polygon points="1246.5,785.0 1263.3,782.9 1266.4,803.9 1259.1,820.7 1248.6,841.7 1246.9,824.9" fill="#88a82c" />
<polygon points="1270.5,724.5 1323.0,706.5 1324.0,791.3 1275.9,798.7" fill="url(#facp)" />
<polygon points="1270.5,724.5 1323.0,706.5 1323.0,716.0 1271.0,734.0" fill="#f07c74" />
<polygon points="1275.9,787.1 1324.1,780.8 1324.1,791.3 1275.9,798.7" fill="#f88c80" />
<polygon points="1280.1,741.0 1324.1,735.7 1324.1,747.3 1280.1,753.6" fill="#e8a070" opacity="0.6"/>
<polygon points="1323.0,706.5 1329.5,705.0 1330.0,793.0 1324.0,791.3" fill="#8c9410" />
<polygon points="1280.1,799.7 1311.5,797.6 1292.7,848.0 1289.5,856.4 1252.8,858.5 1273.8,812.3" fill="#f4b090" />
<polygon points="1286.4,801.8 1301.0,799.7 1284.3,824.9" fill="#e8b070" />
<polygon points="1252.8,858.5 1278.0,857.4 1267.5,872.1 1240.2,872.1" fill="#ded09c" />
<polygon points="1240.2,872.1 1267.5,872.1 1267.5,884.1 1236.0,884.1" fill="#f88880" />
<polygon points="1278.0,857.4 1292.7,845.9 1292.7,866.9 1287.4,869.0 1287.4,882.6 1267.5,884.7 1267.5,872.1" fill="#8a9010" />
<polygon points="1150.0,715.1 1181.5,700.4 1212.9,689.9 1248.6,686.8 1275.9,688.9 1317.8,698.3 1351.4,699.4 1329.5,705.0 1323.0,706.5 1270.5,724.5 1242.0,726.0 1203.0,722.0 1181.5,722.1 1150.0,729.4" fill="url(#archg)" />
<polyline points="1150.0,716.2 1181.5,701.7 1212.9,691.4 1248.6,688.5 1275.9,690.3 1315.7,699.0" fill="none" stroke="#7c7820" stroke-width="2.2" />
<polyline points="1162.6,715.1 1192.0,705.7 1219.2,698.3 1248.6,696.2 1284.3,700.8 1317.8,704.6" fill="none" stroke="#8c8420" stroke-width="2" />
<polyline points="1202.4,713.0 1238.1,707.8 1267.5,709.9 1296.9,716.2" fill="none" stroke="#848020" stroke-width="2" />
<polyline points="1219.2,721.4 1250.7,718.3 1275.9,722.4" fill="none" stroke="#7a8020" stroke-width="1.6" />
<polygon points="1212.9,704.6 1237.1,700.0 1237.7,702.9 1214.0,708.0" fill="#f08878" />
<polygon points="1227.6,700.8 1237.1,700.0 1237.7,702.9 1228.0,704.2" fill="#40d8c8" />
<polygon points="1181.5,706.7 1205.6,702.1 1206.2,705.5 1182.5,710.5" fill="#f08878" />
<polygon points="1195.1,703.6 1205.6,702.1 1206.2,705.5 1195.7,707.1" fill="#40d8c8" />
<polygon points="1150.0,719.3 1168.9,715.1 1169.9,718.3 1150.0,724.5" fill="#f08878" />
<polygon points="1173.1,715.1 1187.8,712.0 1188.8,716.2 1175.2,720.3" fill="#78d838" />
<polygon points="1175.2,721.4 1204.5,713.0 1205.0,716.2 1176.2,726.6" fill="#f08878" />
<polygon points="1091.0,728.4 1117.8,723.5 1144.2,716.6 1153.3,714.3 1153.3,727.8 1130.4,728.7 1091.0,741.3" fill="#9c2c5c" />
<polygon points="1091.0,728.4 1117.8,723.5 1144.2,716.6 1153.3,714.3 1153.3,716.6 1144.2,719.1 1117.8,726.0 1091.0,731.0" fill="#8a4c38" />
<polygon points="1090.3,740.5 1130.7,727.4 1204.4,884.5 1143.0,903.0" fill="url(#stairp)" />
<polygon points="1126.5,728.6 1131.0,727.3 1204.8,884.4 1199.5,886.2" fill="#f0a070" />
<polygon points="1122.5,729.8 1126.5,728.6 1199.5,886.2 1195.5,887.5" fill="#a8d848" />
<polygon points="1088.6,741.0 1093.0,740.0 1146.0,902.0 1141.5,903.6" fill="#f09070" />
<polygon points="1088.8,740.5 1093.8,739.5 1093.3,744.5 1089.3,745.5" fill="#f09070" />
<polygon points="1124.0,728.4 1129.5,727.4 1132.0,732.4 1126.0,733.4" fill="#a0c848" />
<polygon points="1090.8,746.8 1095.8,745.8 1095.3,750.8 1091.3,751.8" fill="#98c040" />
<polygon points="1126.8,734.5 1132.3,733.5 1134.8,738.5 1128.8,739.5" fill="#f09070" />
<polygon points="1092.9,753.0 1097.9,752.0 1097.4,757.0 1093.4,758.0" fill="#f09070" />
<polygon points="1129.7,740.5 1135.2,739.5 1137.7,744.5 1131.7,745.5" fill="#a0c848" />
<polygon points="1094.9,759.2 1099.9,758.2 1099.4,763.2 1095.4,764.2" fill="#98c040" />
<polygon points="1132.5,746.6 1138.0,745.6 1140.5,750.6 1134.5,751.6" fill="#f09070" />
<polygon points="1096.9,765.5 1101.9,764.5 1101.4,769.5 1097.4,770.5" fill="#f09070" />
<polygon points="1135.3,752.6 1140.8,751.6 1143.3,756.6 1137.3,757.6" fill="#a0c848" />
<polygon points="1098.9,771.8 1103.9,770.8 1103.4,775.8 1099.4,776.8" fill="#98c040" />
<polygon points="1138.1,758.7 1143.6,757.7 1146.1,762.7 1140.1,763.7" fill="#f09070" />
<polygon points="1101.0,778.0 1106.0,777.0 1105.5,782.0 1101.5,783.0" fill="#f09070" />
<polygon points="1141.0,764.8 1146.5,763.8 1149.0,768.8 1143.0,769.8" fill="#a0c848" />
<polygon points="1103.0,784.2 1108.0,783.2 1107.5,788.2 1103.5,789.2" fill="#98c040" />
<polygon points="1143.8,770.8 1149.3,769.8 1151.8,774.8 1145.8,775.8" fill="#f09070" />
<polygon points="1105.0,790.5 1110.0,789.5 1109.5,794.5 1105.5,795.5" fill="#f09070" />
<polygon points="1146.6,776.9 1152.1,775.9 1154.6,780.9 1148.6,781.9" fill="#a0c848" />
<polygon points="1107.0,796.8 1112.0,795.8 1111.5,800.8 1107.5,801.8" fill="#98c040" />
<polygon points="1149.4,783.0 1154.9,782.0 1157.4,787.0 1151.4,788.0" fill="#f09070" />
<polygon points="1109.1,803.0 1114.1,802.0 1113.6,807.0 1109.6,808.0" fill="#f09070" />
<polygon points="1152.3,789.0 1157.8,788.0 1160.3,793.0 1154.3,794.0" fill="#a0c848" />
<polygon points="1111.1,809.2 1116.1,808.2 1115.6,813.2 1111.6,814.2" fill="#98c040" />
<polygon points="1155.1,795.1 1160.6,794.1 1163.1,799.1 1157.1,800.1" fill="#f09070" />
<polygon points="1113.1,815.5 1118.1,814.5 1117.6,819.5 1113.6,820.5" fill="#f09070" />
<polygon points="1157.9,801.1 1163.4,800.1 1165.9,805.1 1159.9,806.1" fill="#a0c848" />
<polygon points="1115.2,821.8 1120.2,820.8 1119.7,825.8 1115.7,826.8" fill="#98c040" />
<polygon points="1160.8,807.2 1166.2,806.2 1168.8,811.2 1162.8,812.2" fill="#f09070" />
<polygon points="1117.2,828.0 1122.2,827.0 1121.7,832.0 1117.7,833.0" fill="#f09070" />
<polygon points="1163.6,813.3 1169.1,812.3 1171.6,817.3 1165.6,818.3" fill="#a0c848" />
<polygon points="1119.2,834.2 1124.2,833.2 1123.7,838.2 1119.7,839.2" fill="#98c040" />
<polygon points="1166.4,819.3 1171.9,818.3 1174.4,823.3 1168.4,824.3" fill="#f09070" />
<polygon points="1121.2,840.5 1126.2,839.5 1125.7,844.5 1121.7,845.5" fill="#f09070" />
<polygon points="1169.2,825.4 1174.7,824.4 1177.2,829.4 1171.2,830.4" fill="#a0c848" />
<polygon points="1123.3,846.8 1128.3,845.8 1127.8,850.8 1123.8,851.8" fill="#98c040" />
<polygon points="1172.1,831.4 1177.6,830.4 1180.1,835.4 1174.1,836.4" fill="#f09070" />
<polygon points="1125.3,853.0 1130.3,852.0 1129.8,857.0 1125.8,858.0" fill="#f09070" />
<polygon points="1174.9,837.5 1180.4,836.5 1182.9,841.5 1176.9,842.5" fill="#a0c848" />
<polygon points="1127.3,859.2 1132.3,858.2 1131.8,863.2 1127.8,864.2" fill="#98c040" />
<polygon points="1177.7,843.6 1183.2,842.6 1185.7,847.6 1179.7,848.6" fill="#f09070" />
<polygon points="1129.3,865.5 1134.3,864.5 1133.8,869.5 1129.8,870.5" fill="#f09070" />
<polygon points="1180.5,849.6 1186.0,848.6 1188.5,853.6 1182.5,854.6" fill="#a0c848" />
<polygon points="1131.4,871.8 1136.4,870.8 1135.9,875.8 1131.9,876.8" fill="#98c040" />
<polygon points="1183.4,855.7 1188.9,854.7 1191.4,859.7 1185.4,860.7" fill="#f09070" />
<polygon points="1133.4,878.0 1138.4,877.0 1137.9,882.0 1133.9,883.0" fill="#f09070" />
<polygon points="1186.2,861.8 1191.7,860.8 1194.2,865.8 1188.2,866.8" fill="#a0c848" />
<polygon points="1135.4,884.2 1140.4,883.2 1139.9,888.2 1135.9,889.2" fill="#98c040" />
<polygon points="1189.0,867.8 1194.5,866.8 1197.0,871.8 1191.0,872.8" fill="#f09070" />
<polygon points="1137.4,890.5 1142.4,889.5 1141.9,894.5 1137.9,895.5" fill="#f09070" />
<polygon points="1191.8,873.9 1197.3,872.9 1199.8,877.9 1193.8,878.9" fill="#a0c848" />
<polygon points="1139.5,896.8 1144.5,895.8 1144.0,900.8 1140.0,901.8" fill="#98c040" />
<polygon points="1194.7,879.9 1200.2,878.9 1202.7,883.9 1196.7,884.9" fill="#f09070" />
<polygon points="1185.6,840.6 1187.2,840.6 1187.2,842.0 1185.6,842.0" fill="#e0a050" />
<polygon points="1155.3,887.5 1156.9,887.5 1156.9,888.9 1155.3,888.9" fill="#c89040" />
<polygon points="1190.2,834.1 1191.8,834.1 1191.8,835.5 1190.2,835.5" fill="#e0a050" />
<polygon points="1173.6,836.0 1175.2,836.0 1175.2,837.4 1173.6,837.4" fill="#90b030" />
<polygon points="1157.7,836.3 1159.3,836.3 1159.3,837.7 1157.7,837.7" fill="#90b030" />
<polygon points="1156.5,869.6 1158.1,869.6 1158.1,871.0 1156.5,871.0" fill="#c89040" />
<polygon points="1219.4,870.8 1221.0,870.8 1221.0,872.2 1219.4,872.2" fill="#c89040" />
<polygon points="1213.5,857.8 1215.1,857.8 1215.1,859.2 1213.5,859.2" fill="#c89040" />
<polygon points="1155.1,890.1 1156.7,890.1 1156.7,891.5 1155.1,891.5" fill="#90b030" />
<polygon points="1196.1,867.8 1197.7,867.8 1197.7,869.2 1196.1,869.2" fill="#e0a050" />
<polygon points="1183.9,887.1 1185.5,887.1 1185.5,888.5 1183.9,888.5" fill="#c89040" />
<polygon points="1161.3,870.0 1162.9,870.0 1162.9,871.4 1161.3,871.4" fill="#c89040" />
<polygon points="1191.0,868.3 1192.6,868.3 1192.6,869.7 1191.0,869.7" fill="#c89040" />
<polygon points="1212.1,873.3 1213.7,873.3 1213.7,874.7 1212.1,874.7" fill="#90b030" />
<polygon points="1224.8,859.9 1226.4,859.9 1226.4,861.3 1224.8,861.3" fill="#90b030" />
<polygon points="1201.2,894.6 1202.8,894.6 1202.8,896.0 1201.2,896.0" fill="#90b030" />
<polygon points="1183.0,885.6 1184.6,885.6 1184.6,887.0 1183.0,887.0" fill="#e0a050" />
<polygon points="1235.8,835.7 1237.4,835.7 1237.4,837.1 1235.8,837.1" fill="#90b030" />
<polygon points="1207.8,891.3 1209.4,891.3 1209.4,892.7 1207.8,892.7" fill="#e0a050" />
<polygon points="1199.4,872.6 1201.0,872.6 1201.0,874.0 1199.4,874.0" fill="#c89040" />
<polygon points="1163.0,859.3 1164.6,859.3 1164.6,860.7 1163.0,860.7" fill="#90b030" />
<polygon points="1166.7,864.2 1168.3,864.2 1168.3,865.6 1166.7,865.6" fill="#c89040" />
<polygon points="1211.4,885.2 1213.0,885.2 1213.0,886.6 1211.4,886.6" fill="#90b030" />
<polygon points="1187.4,854.5 1189.0,854.5 1189.0,855.9 1187.4,855.9" fill="#90b030" />
<polygon points="1213.8,861.9 1215.4,861.9 1215.4,863.3 1213.8,863.3" fill="#c89040" />
<polygon points="1253.9,863.2 1255.5,863.2 1255.5,864.6 1253.9,864.6" fill="#e0a050" />
<polygon points="1157.1,881.2 1158.7,881.2 1158.7,882.6 1157.1,882.6" fill="#90b030" />
<polygon points="1240.4,849.9 1242.0,849.9 1242.0,851.3 1240.4,851.3" fill="#90b030" />
<polygon points="1247.6,854.3 1249.2,854.3 1249.2,855.7 1247.6,855.7" fill="#90b030" />
<polygon points="1189.1,872.8 1190.7,872.8 1190.7,874.2 1189.1,874.2" fill="#90b030" />
<polygon points="1156.5,883.8 1158.1,883.8 1158.1,885.2 1156.5,885.2" fill="#c89040" />
<polygon points="1231.2,857.9 1232.8,857.9 1232.8,859.3 1231.2,859.3" fill="#90b030" />
<polygon points="1158.9,861.4 1160.5,861.4 1160.5,862.8 1158.9,862.8" fill="#e0a050" />
<polygon points="1180.6,839.6 1182.2,839.6 1182.2,841.0 1180.6,841.0" fill="#90b030" />
<polygon points="1245.0,849.5 1246.6,849.5 1246.6,850.9 1245.0,850.9" fill="#90b030" />
<polygon points="1258.5,877.8 1260.1,877.8 1260.1,879.2 1258.5,879.2" fill="#90b030" />
<polygon points="1255.4,840.6 1257.0,840.6 1257.0,842.0 1255.4,842.0" fill="#c89040" />
<polygon points="1166.6,876.1 1168.2,876.1 1168.2,877.5 1166.6,877.5" fill="#c89040" />
<polygon points="1150.0,875.2 1192.0,864.8 1205.0,885.7 1150.0,904.6" fill="url(#stairp)" />
<polygon points="1138.0,902.5 1150.0,898.0 1204.5,885.7 1273.8,884.7 1150.0,909.8 1138.2,913.5" fill="#6cf0ac" />
<polygon points="1150.0,902.5 1233.9,887.8 1267.5,884.1 1273.8,884.9 1150.0,909.9" fill="#6cf0ac" />
<polygon points="1045.9,746.2 1083.7,730.5 1083.7,747.3 1051.2,759.9 1045.9,760.9" fill="#f88878" />
<polygon points="1044.9,760.9 1051.2,759.9 1053.3,835.4 1045.9,836.4" fill="#8878f8" />
<polygon points="1051.2,759.9 1082.7,747.3 1086.9,829.1 1054.3,831.2" fill="url(#tealp)" />
<polygon points="1052.2,780.8 1083.7,770.3 1083.9,775.6 1052.4,786.7" fill="#38c8b8" />
<polygon points="1057.5,803.9 1084.8,797.6 1085.8,816.5 1058.5,822.8" fill="#d09858" opacity="0.55"/>
<polygon points="1082.7,728.4 1090.0,728.4 1090.0,827.0 1084.8,829.1" fill="#909010" />
<polygon points="1053.3,785.0 1057.5,784.0 1060.6,829.1 1056.4,830.1" fill="#70a020" />
<polygon points="1034.4,766.2 1044.9,747.3 1047.0,789.2 1041.7,806.0" fill="#1890b0" />
<polygon points="1028.1,751.5 1033.4,746.2 1037.6,772.4 1032.3,768.3" fill="#f07868" />
<polygon points="1058.5,833.3 1086.9,829.1 1107.8,885.7 1105.7,892.0 1084.8,879.4" fill="#20c0b0" />
<polygon points="1065.9,834.3 1076.4,832.9 1096.3,885.7 1091.0,883.6" fill="#2890c0" />
<polygon points="1057.5,834.3 1061.7,833.3 1086.9,881.5 1084.8,882.6" fill="#f07868" />
<polygon points="1084.8,879.4 1105.7,892.0 1112.0,904.6 1091.0,915.1 1084.8,902.5" fill="#8878f8" />
<polygon points="1107.8,879.4 1114.1,887.8 1137.2,902.5 1138.3,913.0 1114.1,918.3 1112.0,904.6" fill="#808010" />
<polygon points="1094.8,818.6 1109.5,817.8 1106.6,829.5 1098.2,829.5" fill="#c8782c" />
<polygon points="1095.7,819.0 1108.7,818.2 1107.4,821.5 1096.9,822.0" fill="#b09030" />
<polygon points="1098.2,830.8 1107.0,830.8 1108.3,860.6 1099.4,861.6" fill="#8cac34" />
<polygon points="1099.9,833.3 1103.2,833.3 1104.5,858.5 1101.5,858.9" fill="#c89040" />
<polygon points="1117.9,862.7 1131.1,861.9 1128.5,872.5 1120.9,872.5" fill="#c8782c" />
<polygon points="1118.7,863.0 1130.4,862.3 1129.2,865.3 1119.8,865.7" fill="#b09030" />
<polygon points="1120.9,873.6 1128.9,873.6 1130.0,900.4 1122.1,901.4" fill="#8cac34" />
<polygon points="1122.4,875.9 1125.5,875.9 1126.6,898.5 1123.9,898.9" fill="#c89040" />
<polygon points="1159.4,743.1 1172.7,742.3 1170.0,752.9 1162.5,752.9" fill="#c8782c" />
<polygon points="1160.2,743.5 1171.9,742.7 1170.8,745.7 1161.3,746.1" fill="#b09030" />
<polygon points="1162.5,754.0 1170.4,754.0 1171.5,780.8 1163.6,781.8" fill="#8cac34" />
<polygon points="1164.0,756.3 1167.0,756.3 1168.1,779.0 1165.5,779.3" fill="#c89040" />
<polygon points="1192.0,803.9 1205.9,803.1 1203.1,814.3 1195.1,814.3" fill="#c8782c" />
<polygon points="1192.8,804.3 1205.1,803.5 1203.9,806.7 1194.0,807.1" fill="#b09030" />
<polygon points="1195.1,815.5 1203.5,815.5 1204.7,843.8 1196.3,844.8" fill="#8cac34" />
<polygon points="1196.7,817.9 1199.9,817.9 1201.1,841.8 1198.3,842.2" fill="#c89040" />
<polygon points="1219.2,843.8 1233.9,842.9 1231.0,854.7 1222.6,854.7" fill="#c8782c" />
<polygon points="1220.1,844.2 1233.1,843.4 1231.8,846.7 1221.3,847.1" fill="#b09030" />
<polygon points="1222.6,855.9 1231.4,855.9 1232.7,885.7 1223.8,886.8" fill="#8cac34" />
<polygon points="1224.3,858.5 1227.6,858.5 1228.9,883.6 1225.9,884.1" fill="#c89040" />
<line x1="810" y1="782.1" x2="1443" y2="711" stroke="#8a8a8a" stroke-width="1"/>
<line x1="803" y1="870.8" x2="1443" y2="774.5" stroke="#8a8a8a" stroke-width="1"/>
<line x1="940" y1="663.3" x2="1066" y2="831" stroke="#8a8a8a" stroke-width="1"/>
<line x1="1329" y1="723.9" x2="1443" y2="768.6" stroke="#8a8a8a" stroke-width="1"/>
<line x1="1160.5" y1="725.2" x2="1281" y2="798.7" stroke="#1818e0" stroke-width="1.2"/>
<line x1="834.5" y1="409" x2="834.5" y2="436.5" stroke="#00ff00" stroke-width="1.2"/>
<line x1="808" y1="438.5" x2="834.5" y2="436.2" stroke="#ff0000" stroke-width="1"/>
<line x1="828" y1="432" x2="834" y2="436" stroke="#0000ff" stroke-width="1.2"/></svg>
</div>
</body></html>
